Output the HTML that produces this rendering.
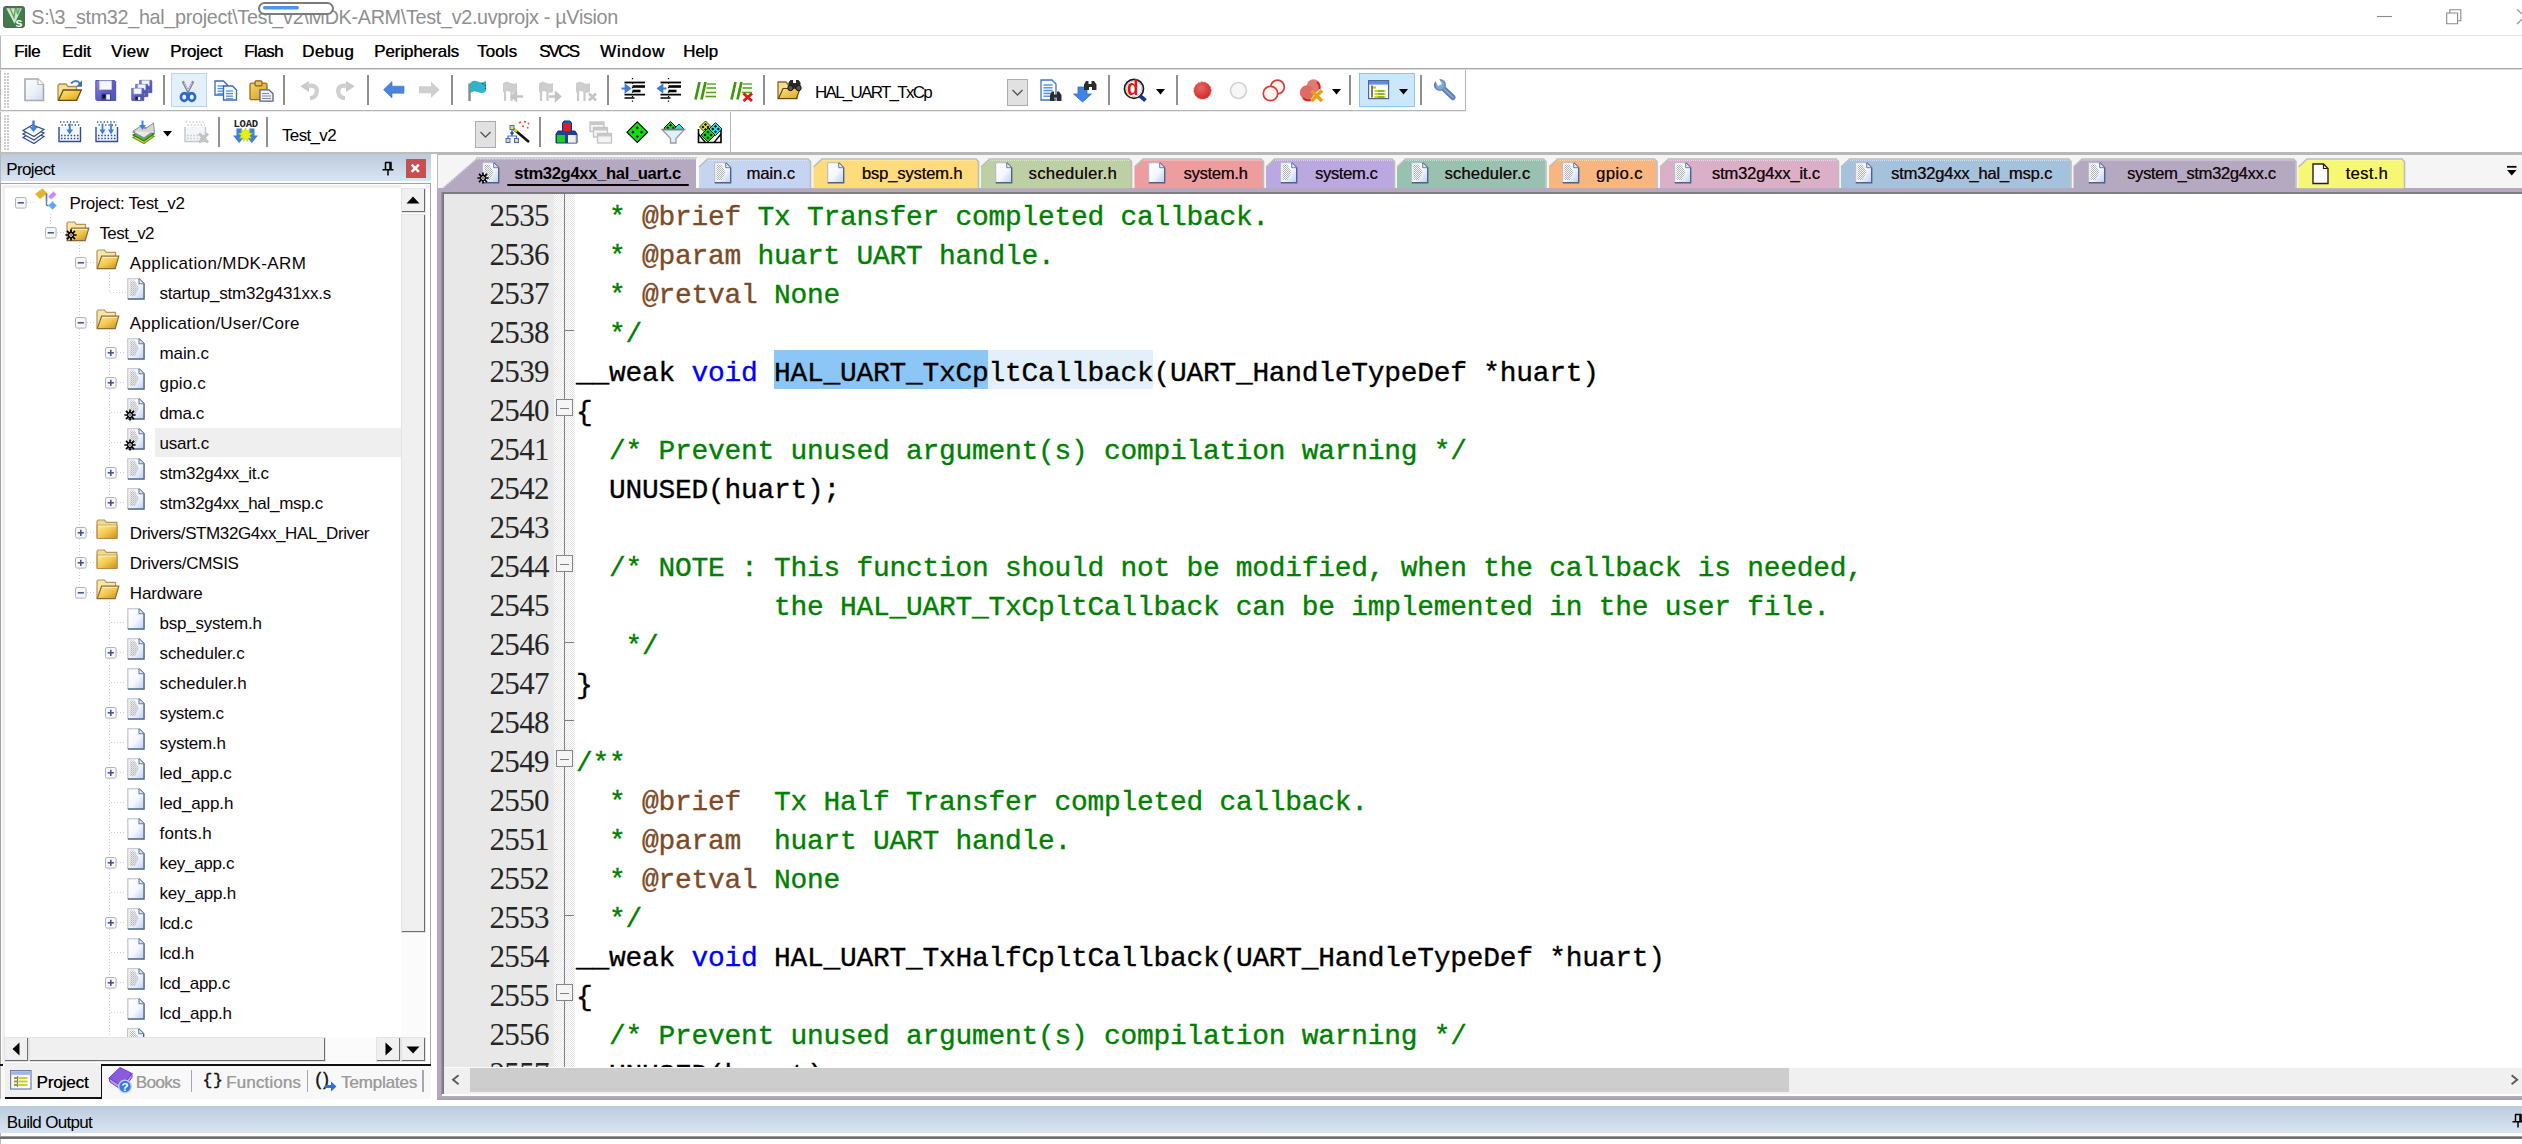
<!DOCTYPE html>
<html><head><meta charset="utf-8"><title>uVision</title>
<style>
html,body{margin:0;padding:0;}
body{width:2522px;height:1144px;overflow:hidden;background:#fff;position:relative;font-family:'Liberation Sans',sans-serif;}
div{box-sizing:border-box;}
svg{position:absolute;overflow:visible;}
</style></head><body>
<div style="position:absolute;left:0px;top:0px;width:2522px;height:35px;background:#fff"></div>
<svg style="left:3px;top:6px" width="22" height="22" viewBox="0 0 22 22">
<rect x="0.6" y="0.6" width="20.8" height="20.8" rx="2.6" fill="#3f7d49" stroke="#595f5a" stroke-width="1.1"/>
<path d="M3.200 2.200h15.600l-7.300 15.500z" fill="#dcefd9" opacity=".92"/>
<path d="M7 2.200l4 9 1.500-9M13.500 2.200l1 6 2-6" stroke="#4a9a55" stroke-width="1.300" fill="none" opacity=".9"/>
<text x="12.300" y="20.600" font-family="Liberation Sans, sans-serif" font-weight="bold" font-size="13" fill="#f5fbf4">s</text>
</svg>
<div style="position:absolute;left:31.3px;top:6.48px;white-space:pre;line-height:22.12px;font-family:'Liberation Sans',sans-serif;font-size:19.8px;font-weight:normal;color:#8f8f8f;letter-spacing:-0.316px;">S:\3_stm32_hal_project\Test_v2\MDK-ARM\Test_v2.uvprojx - µVision</div>
<svg style="left:257px;top:1px" width="78" height="16" viewBox="0 0 78 16">
<rect x="2" y="2" width="74" height="11" rx="5.5" fill="#fff" stroke="#7c7c7c" stroke-width="2"/>
<rect x="6" y="5" width="36" height="3.5" rx="1.7" fill="#4b97ea"/></svg>
<svg style="left:2370px;top:6px" width="152" height="24" viewBox="0 0 152 24">
<path d="M7 10.500h15" stroke="#8a8a8a" stroke-width="1.100" fill="none"/>
<path d="M76.700 7h10.900v10.700h-10.900z M79.800 7V3.800h11v10.900h-3.200" stroke="#8a8a8a" stroke-width="1.100" fill="none"/>
<path d="M147 3.300l8 7.500 M147 18l8-7.500" stroke="#8a8a8a" stroke-width="1.100" fill="none"/>
</svg>
<div style="position:absolute;left:0px;top:35px;width:2522px;height:1px;background:#e4e4e4"></div>
<div style="position:absolute;left:0px;top:36px;width:1px;height:1108px;background:#b9b9b9"></div>
<div style="position:absolute;left:14px;top:42.12px;white-space:pre;line-height:18.99px;font-family:'Liberation Sans',sans-serif;font-size:17px;font-weight:normal;color:#000;letter-spacing:-0.352px;text-shadow:0.5px 0 0 rgba(0,0,0,.75)">File</div>
<div style="position:absolute;left:62px;top:42.12px;white-space:pre;line-height:18.99px;font-family:'Liberation Sans',sans-serif;font-size:17px;font-weight:normal;color:#000;letter-spacing:-0.074px;text-shadow:0.5px 0 0 rgba(0,0,0,.75)">Edit</div>
<div style="position:absolute;left:111px;top:42.12px;white-space:pre;line-height:18.99px;font-family:'Liberation Sans',sans-serif;font-size:17px;font-weight:normal;color:#000;letter-spacing:0.363px;text-shadow:0.5px 0 0 rgba(0,0,0,.75)">View</div>
<div style="position:absolute;left:170px;top:42.12px;white-space:pre;line-height:18.99px;font-family:'Liberation Sans',sans-serif;font-size:17px;font-weight:normal;color:#000;letter-spacing:-0.132px;text-shadow:0.5px 0 0 rgba(0,0,0,.75)">Project</div>
<div style="position:absolute;left:244px;top:42.12px;white-space:pre;line-height:18.99px;font-family:'Liberation Sans',sans-serif;font-size:17px;font-weight:normal;color:#000;letter-spacing:-0.516px;text-shadow:0.5px 0 0 rgba(0,0,0,.75)">Flash</div>
<div style="position:absolute;left:302px;top:42.12px;white-space:pre;line-height:18.99px;font-family:'Liberation Sans',sans-serif;font-size:17px;font-weight:normal;color:#000;letter-spacing:0.378px;text-shadow:0.5px 0 0 rgba(0,0,0,.75)">Debug</div>
<div style="position:absolute;left:374px;top:42.12px;white-space:pre;line-height:18.99px;font-family:'Liberation Sans',sans-serif;font-size:17px;font-weight:normal;color:#000;letter-spacing:-0.091px;text-shadow:0.5px 0 0 rgba(0,0,0,.75)">Peripherals</div>
<div style="position:absolute;left:477px;top:42.12px;white-space:pre;line-height:18.99px;font-family:'Liberation Sans',sans-serif;font-size:17px;font-weight:normal;color:#000;letter-spacing:0.062px;text-shadow:0.5px 0 0 rgba(0,0,0,.75)">Tools</div>
<div style="position:absolute;left:539px;top:42.12px;white-space:pre;line-height:18.99px;font-family:'Liberation Sans',sans-serif;font-size:17px;font-weight:normal;color:#000;letter-spacing:-1.824px;text-shadow:0.5px 0 0 rgba(0,0,0,.75)">SVCS</div>
<div style="position:absolute;left:600px;top:42.12px;white-space:pre;line-height:18.99px;font-family:'Liberation Sans',sans-serif;font-size:17px;font-weight:normal;color:#000;letter-spacing:0.755px;text-shadow:0.5px 0 0 rgba(0,0,0,.75)">Window</div>
<div style="position:absolute;left:683px;top:42.12px;white-space:pre;line-height:18.99px;font-family:'Liberation Sans',sans-serif;font-size:17px;font-weight:normal;color:#000;letter-spacing:0.008px;text-shadow:0.5px 0 0 rgba(0,0,0,.75)">Help</div>
<div style="position:absolute;left:0px;top:68px;width:2522px;height:1px;background:#a9a9a9"></div>
<div style="position:absolute;left:0px;top:69px;width:2522px;height:1px;background:#dcdcdc"></div>
<div style="position:absolute;left:0px;top:110px;width:1466px;height:1px;background:#b4b4b4"></div>
<div style="position:absolute;left:1465px;top:70px;width:1px;height:41px;background:#b4b4b4"></div>
<div style="position:absolute;left:0px;top:111px;width:1466px;height:1px;background:#ececec"></div>
<div style="position:absolute;left:730px;top:112px;width:1px;height:42px;background:#b4b4b4"></div>
<div style="position:absolute;left:4px;top:73px;width:6px;height:35px;background-image:radial-gradient(circle at 1px 1px,#cdcdcd 0.75px,transparent 1.1px);background-size:3px 3px"></div>
<div style="position:absolute;left:4px;top:115px;width:6px;height:35px;background-image:radial-gradient(circle at 1px 1px,#cdcdcd 0.75px,transparent 1.1px);background-size:3px 3px"></div>
<div style="position:absolute;left:163px;top:75px;width:2px;height:30px;background:#8f8f8f;width:1.5px"></div>
<div style="position:absolute;left:283px;top:75px;width:2px;height:30px;background:#8f8f8f;width:1.5px"></div>
<div style="position:absolute;left:367px;top:75px;width:2px;height:30px;background:#8f8f8f;width:1.5px"></div>
<div style="position:absolute;left:451px;top:75px;width:2px;height:30px;background:#8f8f8f;width:1.5px"></div>
<div style="position:absolute;left:607px;top:75px;width:2px;height:30px;background:#8f8f8f;width:1.5px"></div>
<div style="position:absolute;left:763px;top:75px;width:2px;height:30px;background:#8f8f8f;width:1.5px"></div>
<div style="position:absolute;left:1108px;top:75px;width:2px;height:30px;background:#8f8f8f;width:1.5px"></div>
<div style="position:absolute;left:1176px;top:75px;width:2px;height:30px;background:#8f8f8f;width:1.5px"></div>
<div style="position:absolute;left:1349px;top:75px;width:2px;height:30px;background:#8f8f8f;width:1.5px"></div>
<div style="position:absolute;left:1420px;top:75px;width:2px;height:30px;background:#8f8f8f;width:1.5px"></div>
<div style="position:absolute;left:218px;top:117px;width:2px;height:30px;background:#8f8f8f;width:1.5px"></div>
<div style="position:absolute;left:266px;top:117px;width:2px;height:30px;background:#8f8f8f;width:1.5px"></div>
<div style="position:absolute;left:539px;top:117px;width:2px;height:30px;background:#8f8f8f;width:1.5px"></div>
<div style="position:absolute;left:171px;top:72.6px;width:36px;height:34.4px;background:#e3f0fa;border:1px solid #b4d7f3"></div>
<div style="position:absolute;left:1359px;top:73px;width:56px;height:34px;background:#cce6fb;border:1px solid #8cc4f2"></div>
<div style="position:absolute;left:815px;top:83.21px;white-space:pre;line-height:18.99px;font-family:'Liberation Sans',sans-serif;font-size:17px;font-weight:normal;color:#000;letter-spacing:-1.737px;">HAL_UART_TxCp</div>
<div style="position:absolute;left:1007px;top:79px;width:21px;height:27px;background:#e1e1e1;border:1px solid #adadad"></div>
<svg style="left:1007px;top:79px" width="21" height="27"><path d="M5.5 11l5 5 5-5" stroke="#555" stroke-width="1.3" fill="none"/></svg>
<div style="position:absolute;left:282px;top:125.61px;white-space:pre;line-height:18.99px;font-family:'Liberation Sans',sans-serif;font-size:17px;font-weight:normal;color:#000;letter-spacing:-0.656px;">Test_v2</div>
<div style="position:absolute;left:475px;top:121px;width:21px;height:27px;background:#e1e1e1;border:1px solid #adadad"></div>
<svg style="left:475px;top:121px" width="21" height="27"><path d="M5.5 11l5 5 5-5" stroke="#555" stroke-width="1.3" fill="none"/></svg>
<div style="position:absolute;left:0px;top:152px;width:437px;height:1.8px;background:#bdbdbd"></div>
<div style="position:absolute;left:436.7px;top:152.3px;width:2086px;height:2.5px;background:#b8b8b8"></div>
<div style="position:absolute;left:1px;top:154px;width:430px;height:26.5px;background:linear-gradient(#bccbdc,#d8e4f2)"></div>
<div style="position:absolute;left:6.2px;top:159.81px;white-space:pre;line-height:18.99px;font-family:'Liberation Sans',sans-serif;font-size:17px;font-weight:normal;color:#000;letter-spacing:-0.632px;">Project</div>
<svg style="left:381px;top:161px" width="14" height="15" viewBox="0 0 14 15"><path d="M4 1.5h6.5M4.5 1.5v7M9 1.5v7M10 1.5v7M1.5 8.8h11M7 9v5.5" stroke="#000" stroke-width="1.5" fill="none"/></svg>
<div style="position:absolute;left:406px;top:159px;width:19.5px;height:19px;background:#c84f4f"></div>
<svg style="left:406px;top:159px" width="20" height="19"><path d="M5.6 5.600l7.300 7.200 M12.900 5.600l-7.300 7.200" stroke="#fff" stroke-width="2.500" fill="none"/></svg>
<div style="position:absolute;left:0px;top:183.3px;width:430.5px;height:881px;border:1.5px solid #a2a2a2;border-right:1px solid #a8a8a8;border-bottom:none;background:#fff"></div>
<div style="position:absolute;left:1.5px;top:184.8px;width:428px;height:879px;border-top:3px solid #f0f0f0;border-left:3px solid #f0f0f0"></div>
<div style="position:absolute;left:437px;top:154.5px;width:2085px;height:34px;background:#f5f5f5"></div>
<div style="position:absolute;left:436.7px;top:154px;width:1px;height:34px;background:#b9b9b9"></div>
<div style="position:absolute;left:431px;top:154px;width:5.7px;height:945px;background:#fff"></div>
<div style="position:absolute;left:437px;top:188px;width:2085px;height:4px;background:#b5a8c1"></div>
<div style="position:absolute;left:437px;top:188px;width:4.6px;height:911px;background:#b5a8c1"></div>
<div style="position:absolute;left:442px;top:191.5px;width:2080px;height:2.2px;background:#7d7d7d"></div>
<div style="position:absolute;left:441.4px;top:191.5px;width:2.7px;height:902.2px;background:linear-gradient(90deg,#9a9a9a,#6e6e6e)"></div>
<svg style="left:0;top:0" width="2522" height="200"><path d="M442 188.5L476.5 158.6H696V188.5z" fill="#b5a8c1"/><path d="M443 188L476.5 159H696.5" fill="none" stroke="#d9d4de" stroke-width="1.5" stroke-dasharray="1.5 1.5"/><path d="M697.5 159.5V188" stroke="#fbfbfb" stroke-width="2.5"/><path d="M476 157.6H697" stroke="#c9c9c9" stroke-width="1"/></svg>
<svg style="left:481.5px;top:162px" width="17.5" height="21.5" viewBox="0 0 17.5 21.5"><linearGradient id="f64" x1="0" y1="0" x2="1" y2="1"><stop offset="0" stop-color="#fff"/><stop offset=".55" stop-color="#f4f7fd"/><stop offset="1" stop-color="#b9cdf0"/></linearGradient><path d="M.7 .7h11l5 5v15H.7z" fill="url(#f64)"/><path d="M.7 20.7V.7h11" fill="none" stroke="#b4bccb" stroke-width="1.1"/><path d="M11.7 .7l5 5v15H.7" fill="none" stroke="#4f6389" stroke-width="1.4"/><path d="M11.7 .9v4.8h4.8" fill="#dfe8f8" stroke="#6a7da3" stroke-width="1"/><pattern id="p64" width="2" height="2" patternUnits="userSpaceOnUse"><rect width="1" height="1" fill="#9a9a9a"/><rect x="1" y="1" width="1" height="1" fill="#9a9a9a"/></pattern><path d="M2.5 2.5h5l4 7.5-4 8h-5z" fill="url(#p64)" opacity=".75"/></svg>
<svg style="left:475.5px;top:171px" width="14" height="14" viewBox="-7 -7 14 14"><g stroke="#000" stroke-width="1.7" fill="none"><path d="M-5.6 0h11.2M0-5.6v11.2M-4.032-4.032l8.064 8.064M4.032-4.032l-8.064 8.064"/></g><circle r="2.3" fill="#fff" stroke="#000" stroke-width="1.2"/><circle r=".8" fill="#000"/></svg>
<div style="position:absolute;left:514.3px;top:164.98px;white-space:pre;line-height:18.54px;font-family:'Liberation Sans',sans-serif;font-size:16.6px;font-weight:bold;color:#000;letter-spacing:-0.336px;">stm32g4xx_hal_uart.c</div>
<div style="position:absolute;left:507px;top:183.6px;width:182px;height:2.6px;background:#0a0406;border-radius:1.3px"></div>
<svg style="left:0;top:0" width="2522" height="200"><path d="M699 188.3V167l8.5-7.6H808l2 2V188.3z" fill="#c5d5f1"/><path d="M699 167l8.5-8H808l2.5 2.5V188" fill="none" stroke="#bdbdbd" stroke-width="1.6"/><path d="M708 160.4H808" fill="none" stroke="#fff" stroke-opacity=".55" stroke-width="1" stroke-dasharray="1 1"/><path d="M813.5 188.3V167l8.5-7.6H976l2 2V188.3z" fill="#fedc7b"/><path d="M813.5 167l8.5-8H976l2.5 2.5V188" fill="none" stroke="#bdbdbd" stroke-width="1.6"/><path d="M822.5 160.4H976" fill="none" stroke="#fff" stroke-opacity=".55" stroke-width="1" stroke-dasharray="1 1"/><path d="M981 188.3V167l8.5-7.6H1129l2 2V188.3z" fill="#bdd0a3"/><path d="M981 167l8.5-8H1129l2.5 2.5V188" fill="none" stroke="#bdbdbd" stroke-width="1.6"/><path d="M990 160.4H1129" fill="none" stroke="#fff" stroke-opacity=".55" stroke-width="1" stroke-dasharray="1 1"/><path d="M1134.5 188.3V167l8.5-7.6H1261l2 2V188.3z" fill="#ee9d9e"/><path d="M1134.5 167l8.5-8H1261l2.5 2.5V188" fill="none" stroke="#bdbdbd" stroke-width="1.6"/><path d="M1143.5 160.4H1261" fill="none" stroke="#fff" stroke-opacity=".55" stroke-width="1" stroke-dasharray="1 1"/><path d="M1266 188.3V167l8.5-7.6H1392l2 2V188.3z" fill="#bba8e0"/><path d="M1266 167l8.5-8H1392l2.5 2.5V188" fill="none" stroke="#bdbdbd" stroke-width="1.6"/><path d="M1275 160.4H1392" fill="none" stroke="#fff" stroke-opacity=".55" stroke-width="1" stroke-dasharray="1 1"/><path d="M1397 188.3V167l8.5-7.6H1543.5l2 2V188.3z" fill="#98c1b0"/><path d="M1397 167l8.5-8H1543.5l2.5 2.5V188" fill="none" stroke="#bdbdbd" stroke-width="1.6"/><path d="M1406 160.4H1543.5" fill="none" stroke="#fff" stroke-opacity=".55" stroke-width="1" stroke-dasharray="1 1"/><path d="M1549 188.3V167l8.5-7.6H1654.5l2 2V188.3z" fill="#f7b57f"/><path d="M1549 167l8.5-8H1654.5l2.5 2.5V188" fill="none" stroke="#bdbdbd" stroke-width="1.6"/><path d="M1558 160.4H1654.5" fill="none" stroke="#fff" stroke-opacity=".55" stroke-width="1" stroke-dasharray="1 1"/><path d="M1660 188.3V167l8.5-7.6H1836l2 2V188.3z" fill="#dbafc8"/><path d="M1660 167l8.5-8H1836l2.5 2.5V188" fill="none" stroke="#bdbdbd" stroke-width="1.6"/><path d="M1669 160.4H1836" fill="none" stroke="#fff" stroke-opacity=".55" stroke-width="1" stroke-dasharray="1 1"/><path d="M1841 188.3V167l8.5-7.6H2068.5l2 2V188.3z" fill="#a5c2dd"/><path d="M1841 167l8.5-8H2068.5l2.5 2.5V188" fill="none" stroke="#bdbdbd" stroke-width="1.6"/><path d="M1850 160.4H2068.5" fill="none" stroke="#fff" stroke-opacity=".55" stroke-width="1" stroke-dasharray="1 1"/><path d="M2073.5 188.3V167l8.5-7.6H2293.5l2 2V188.3z" fill="#b5a8c1"/><path d="M2073.5 167l8.5-8H2293.5l2.5 2.5V188" fill="none" stroke="#bdbdbd" stroke-width="1.6"/><path d="M2082.5 160.4H2293.5" fill="none" stroke="#fff" stroke-opacity=".55" stroke-width="1" stroke-dasharray="1 1"/><path d="M2298.5 188.3V167l8.5-7.6H2402l2 2V188.3z" fill="#f6f874"/><path d="M2298.5 167l8.5-8H2402l2.5 2.5V188" fill="none" stroke="#bdbdbd" stroke-width="1.6"/><path d="M2307.5 160.4H2402" fill="none" stroke="#fff" stroke-opacity=".55" stroke-width="1" stroke-dasharray="1 1"/></svg>
<svg style="left:713.5px;top:161.8px" width="17.5" height="21.5" viewBox="0 0 17.5 21.5"><linearGradient id="f69" x1="0" y1="0" x2="1" y2="1"><stop offset="0" stop-color="#fff"/><stop offset=".55" stop-color="#f4f7fd"/><stop offset="1" stop-color="#b9cdf0"/></linearGradient><path d="M.7 .7h11l5 5v15H.7z" fill="url(#f69)"/><path d="M.7 20.7V.7h11" fill="none" stroke="#b4bccb" stroke-width="1.1"/><path d="M11.7 .7l5 5v15H.7" fill="none" stroke="#4f6389" stroke-width="1.4"/><path d="M11.7 .9v4.8h4.8" fill="#dfe8f8" stroke="#6a7da3" stroke-width="1"/><pattern id="p69" width="2" height="2" patternUnits="userSpaceOnUse"><rect width="1" height="1" fill="#9a9a9a"/><rect x="1" y="1" width="1" height="1" fill="#9a9a9a"/></pattern><path d="M2.5 2.5h5l4 7.5-4 8h-5z" fill="url(#p69)" opacity=".75"/></svg>
<div style="position:absolute;left:746.4px;top:164.98px;white-space:pre;line-height:18.54px;font-family:'Liberation Sans',sans-serif;font-size:16.6px;font-weight:normal;color:#15090c;letter-spacing:-0.046px;text-shadow:0.35px 0 0 rgba(20,8,12,.7)">main.c</div>
<svg style="left:827px;top:161.8px" width="17.5" height="21.5" viewBox="0 0 17.5 21.5"><linearGradient id="f71" x1="0" y1="0" x2="1" y2="1"><stop offset="0" stop-color="#fff"/><stop offset=".55" stop-color="#f4f7fd"/><stop offset="1" stop-color="#b9cdf0"/></linearGradient><path d="M.7 .7h11l5 5v15H.7z" fill="url(#f71)"/><path d="M.7 20.7V.7h11" fill="none" stroke="#b4bccb" stroke-width="1.1"/><path d="M11.7 .7l5 5v15H.7" fill="none" stroke="#4f6389" stroke-width="1.4"/><path d="M11.7 .9v4.8h4.8" fill="#dfe8f8" stroke="#6a7da3" stroke-width="1"/></svg>
<div style="position:absolute;left:861.8px;top:164.98px;white-space:pre;line-height:18.54px;font-family:'Liberation Sans',sans-serif;font-size:16.6px;font-weight:normal;color:#15090c;letter-spacing:-0.156px;text-shadow:0.35px 0 0 rgba(20,8,12,.7)">bsp_system.h</div>
<svg style="left:995px;top:161.8px" width="17.5" height="21.5" viewBox="0 0 17.5 21.5"><linearGradient id="f73" x1="0" y1="0" x2="1" y2="1"><stop offset="0" stop-color="#fff"/><stop offset=".55" stop-color="#f4f7fd"/><stop offset="1" stop-color="#b9cdf0"/></linearGradient><path d="M.7 .7h11l5 5v15H.7z" fill="url(#f73)"/><path d="M.7 20.7V.7h11" fill="none" stroke="#b4bccb" stroke-width="1.1"/><path d="M11.7 .7l5 5v15H.7" fill="none" stroke="#4f6389" stroke-width="1.4"/><path d="M11.7 .9v4.8h4.8" fill="#dfe8f8" stroke="#6a7da3" stroke-width="1"/></svg>
<div style="position:absolute;left:1028.5px;top:164.98px;white-space:pre;line-height:18.54px;font-family:'Liberation Sans',sans-serif;font-size:16.6px;font-weight:normal;color:#15090c;letter-spacing:0.330px;text-shadow:0.35px 0 0 rgba(20,8,12,.7)">scheduler.h</div>
<svg style="left:1148.4px;top:161.8px" width="17.5" height="21.5" viewBox="0 0 17.5 21.5"><linearGradient id="f75" x1="0" y1="0" x2="1" y2="1"><stop offset="0" stop-color="#fff"/><stop offset=".55" stop-color="#f4f7fd"/><stop offset="1" stop-color="#b9cdf0"/></linearGradient><path d="M.7 .7h11l5 5v15H.7z" fill="url(#f75)"/><path d="M.7 20.7V.7h11" fill="none" stroke="#b4bccb" stroke-width="1.1"/><path d="M11.7 .7l5 5v15H.7" fill="none" stroke="#4f6389" stroke-width="1.4"/><path d="M11.7 .9v4.8h4.8" fill="#dfe8f8" stroke="#6a7da3" stroke-width="1"/></svg>
<div style="position:absolute;left:1183.4px;top:164.98px;white-space:pre;line-height:18.54px;font-family:'Liberation Sans',sans-serif;font-size:16.6px;font-weight:normal;color:#15090c;letter-spacing:-0.288px;text-shadow:0.35px 0 0 rgba(20,8,12,.7)">system.h</div>
<svg style="left:1280.4px;top:161.8px" width="17.5" height="21.5" viewBox="0 0 17.5 21.5"><linearGradient id="f77" x1="0" y1="0" x2="1" y2="1"><stop offset="0" stop-color="#fff"/><stop offset=".55" stop-color="#f4f7fd"/><stop offset="1" stop-color="#b9cdf0"/></linearGradient><path d="M.7 .7h11l5 5v15H.7z" fill="url(#f77)"/><path d="M.7 20.7V.7h11" fill="none" stroke="#b4bccb" stroke-width="1.1"/><path d="M11.7 .7l5 5v15H.7" fill="none" stroke="#4f6389" stroke-width="1.4"/><path d="M11.7 .9v4.8h4.8" fill="#dfe8f8" stroke="#6a7da3" stroke-width="1"/><pattern id="p77" width="2" height="2" patternUnits="userSpaceOnUse"><rect width="1" height="1" fill="#9a9a9a"/><rect x="1" y="1" width="1" height="1" fill="#9a9a9a"/></pattern><path d="M2.5 2.5h5l4 7.5-4 8h-5z" fill="url(#p77)" opacity=".75"/></svg>
<div style="position:absolute;left:1315px;top:164.98px;white-space:pre;line-height:18.54px;font-family:'Liberation Sans',sans-serif;font-size:16.6px;font-weight:normal;color:#15090c;letter-spacing:-0.384px;text-shadow:0.35px 0 0 rgba(20,8,12,.7)">system.c</div>
<svg style="left:1410.6px;top:161.8px" width="17.5" height="21.5" viewBox="0 0 17.5 21.5"><linearGradient id="f79" x1="0" y1="0" x2="1" y2="1"><stop offset="0" stop-color="#fff"/><stop offset=".55" stop-color="#f4f7fd"/><stop offset="1" stop-color="#b9cdf0"/></linearGradient><path d="M.7 .7h11l5 5v15H.7z" fill="url(#f79)"/><path d="M.7 20.7V.7h11" fill="none" stroke="#b4bccb" stroke-width="1.1"/><path d="M11.7 .7l5 5v15H.7" fill="none" stroke="#4f6389" stroke-width="1.4"/><path d="M11.7 .9v4.8h4.8" fill="#dfe8f8" stroke="#6a7da3" stroke-width="1"/><pattern id="p79" width="2" height="2" patternUnits="userSpaceOnUse"><rect width="1" height="1" fill="#9a9a9a"/><rect x="1" y="1" width="1" height="1" fill="#9a9a9a"/></pattern><path d="M2.5 2.5h5l4 7.5-4 8h-5z" fill="url(#p79)" opacity=".75"/></svg>
<div style="position:absolute;left:1444.4px;top:164.98px;white-space:pre;line-height:18.54px;font-family:'Liberation Sans',sans-serif;font-size:16.6px;font-weight:normal;color:#15090c;letter-spacing:0.177px;text-shadow:0.35px 0 0 rgba(20,8,12,.7)">scheduler.c</div>
<svg style="left:1562.4px;top:161.8px" width="17.5" height="21.5" viewBox="0 0 17.5 21.5"><linearGradient id="f81" x1="0" y1="0" x2="1" y2="1"><stop offset="0" stop-color="#fff"/><stop offset=".55" stop-color="#f4f7fd"/><stop offset="1" stop-color="#b9cdf0"/></linearGradient><path d="M.7 .7h11l5 5v15H.7z" fill="url(#f81)"/><path d="M.7 20.7V.7h11" fill="none" stroke="#b4bccb" stroke-width="1.1"/><path d="M11.7 .7l5 5v15H.7" fill="none" stroke="#4f6389" stroke-width="1.4"/><path d="M11.7 .9v4.8h4.8" fill="#dfe8f8" stroke="#6a7da3" stroke-width="1"/><pattern id="p81" width="2" height="2" patternUnits="userSpaceOnUse"><rect width="1" height="1" fill="#9a9a9a"/><rect x="1" y="1" width="1" height="1" fill="#9a9a9a"/></pattern><path d="M2.5 2.5h5l4 7.5-4 8h-5z" fill="url(#p81)" opacity=".75"/></svg>
<div style="position:absolute;left:1596px;top:164.98px;white-space:pre;line-height:18.54px;font-family:'Liberation Sans',sans-serif;font-size:16.6px;font-weight:normal;color:#15090c;letter-spacing:0.420px;text-shadow:0.35px 0 0 rgba(20,8,12,.7)">gpio.c</div>
<svg style="left:1673.6px;top:161.8px" width="17.5" height="21.5" viewBox="0 0 17.5 21.5"><linearGradient id="f83" x1="0" y1="0" x2="1" y2="1"><stop offset="0" stop-color="#fff"/><stop offset=".55" stop-color="#f4f7fd"/><stop offset="1" stop-color="#b9cdf0"/></linearGradient><path d="M.7 .7h11l5 5v15H.7z" fill="url(#f83)"/><path d="M.7 20.7V.7h11" fill="none" stroke="#b4bccb" stroke-width="1.1"/><path d="M11.7 .7l5 5v15H.7" fill="none" stroke="#4f6389" stroke-width="1.4"/><path d="M11.7 .9v4.8h4.8" fill="#dfe8f8" stroke="#6a7da3" stroke-width="1"/><pattern id="p83" width="2" height="2" patternUnits="userSpaceOnUse"><rect width="1" height="1" fill="#9a9a9a"/><rect x="1" y="1" width="1" height="1" fill="#9a9a9a"/></pattern><path d="M2.5 2.5h5l4 7.5-4 8h-5z" fill="url(#p83)" opacity=".75"/></svg>
<div style="position:absolute;left:1711.8px;top:164.98px;white-space:pre;line-height:18.54px;font-family:'Liberation Sans',sans-serif;font-size:16.6px;font-weight:normal;color:#15090c;letter-spacing:-0.191px;text-shadow:0.35px 0 0 rgba(20,8,12,.7)">stm32g4xx_it.c</div>
<svg style="left:1855.4px;top:161.8px" width="17.5" height="21.5" viewBox="0 0 17.5 21.5"><linearGradient id="f85" x1="0" y1="0" x2="1" y2="1"><stop offset="0" stop-color="#fff"/><stop offset=".55" stop-color="#f4f7fd"/><stop offset="1" stop-color="#b9cdf0"/></linearGradient><path d="M.7 .7h11l5 5v15H.7z" fill="url(#f85)"/><path d="M.7 20.7V.7h11" fill="none" stroke="#b4bccb" stroke-width="1.1"/><path d="M11.7 .7l5 5v15H.7" fill="none" stroke="#4f6389" stroke-width="1.4"/><path d="M11.7 .9v4.8h4.8" fill="#dfe8f8" stroke="#6a7da3" stroke-width="1"/><pattern id="p85" width="2" height="2" patternUnits="userSpaceOnUse"><rect width="1" height="1" fill="#9a9a9a"/><rect x="1" y="1" width="1" height="1" fill="#9a9a9a"/></pattern><path d="M2.5 2.5h5l4 7.5-4 8h-5z" fill="url(#p85)" opacity=".75"/></svg>
<div style="position:absolute;left:1891px;top:164.98px;white-space:pre;line-height:18.54px;font-family:'Liberation Sans',sans-serif;font-size:16.6px;font-weight:normal;color:#15090c;letter-spacing:-0.216px;text-shadow:0.35px 0 0 rgba(20,8,12,.7)">stm32g4xx_hal_msp.c</div>
<svg style="left:2088px;top:161.8px" width="17.5" height="21.5" viewBox="0 0 17.5 21.5"><linearGradient id="f87" x1="0" y1="0" x2="1" y2="1"><stop offset="0" stop-color="#fff"/><stop offset=".55" stop-color="#f4f7fd"/><stop offset="1" stop-color="#b9cdf0"/></linearGradient><path d="M.7 .7h11l5 5v15H.7z" fill="url(#f87)"/><path d="M.7 20.7V.7h11" fill="none" stroke="#b4bccb" stroke-width="1.1"/><path d="M11.7 .7l5 5v15H.7" fill="none" stroke="#4f6389" stroke-width="1.4"/><path d="M11.7 .9v4.8h4.8" fill="#dfe8f8" stroke="#6a7da3" stroke-width="1"/><pattern id="p87" width="2" height="2" patternUnits="userSpaceOnUse"><rect width="1" height="1" fill="#9a9a9a"/><rect x="1" y="1" width="1" height="1" fill="#9a9a9a"/></pattern><path d="M2.5 2.5h5l4 7.5-4 8h-5z" fill="url(#p87)" opacity=".75"/></svg>
<div style="position:absolute;left:2127px;top:164.98px;white-space:pre;line-height:18.54px;font-family:'Liberation Sans',sans-serif;font-size:16.6px;font-weight:normal;color:#15090c;letter-spacing:-0.352px;text-shadow:0.35px 0 0 rgba(20,8,12,.7)">system_stm32g4xx.c</div>
<svg style="left:2311px;top:162.5px" width="19.5" height="21.5" viewBox="0 0 17.5 21.5"><path d="M1 1h10.5l4.5 4.5v15h-15z" fill="#fff" stroke="#222" stroke-width="1.4"/><path d="M11.5 1v4.5h4.5" fill="none" stroke="#222" stroke-width="1.2"/></svg>
<div style="position:absolute;left:2345.6px;top:164.98px;white-space:pre;line-height:18.54px;font-family:'Liberation Sans',sans-serif;font-size:16.6px;font-weight:normal;color:#15090c;letter-spacing:0.301px;text-shadow:0.35px 0 0 rgba(20,8,12,.7)">test.h</div>
<svg style="left:2506px;top:165px" width="12" height="12"><path d="M1 1.8h9.5" stroke="#000" stroke-width="1.8"/><path d="M1 5h9.5l-4.75 5.5z" fill="#000"/></svg>
<div style="position:absolute;left:444px;top:194px;width:2078px;height:873.5px;background:#fff;overflow:hidden"></div>
<div style="position:absolute;left:444px;top:194px;width:109.5px;height:873.5px;background:#e8e8e8"></div>
<div style="position:absolute;left:553.5px;top:194px;width:21.5px;height:873.5px;background-color:#f3f3f3;background-image:conic-gradient(#fff 25%,#e6e6e6 0 50%,#fff 0 75%,#e6e6e6 0);background-size:2px 2px"></div>
<div style="position:absolute;left:563.6px;top:194px;width:1.3px;height:873.5px;background:#808080"></div>
<div style="position:absolute;left:773.5px;top:350px;width:214.5px;height:39px;background:#8cc6f6"></div>
<div style="position:absolute;left:988px;top:350px;width:165px;height:39px;background:#e3f0fc"></div>
<div style="position:absolute;left:0;top:0;width:2522px;height:1067.5px;overflow:hidden"><div style="position:absolute;left:444px;top:195.5px;width:105px;height:39px;line-height:39px;text-align:right;font-family:'Liberation Serif',serif;font-size:31px;letter-spacing:-0.6px;color:#262626;transform-origin:100% 50%">2535</div><div style="position:absolute;left:576.1px;top:197.6px;height:39px;line-height:39px;white-space:pre;font-family:'Liberation Mono',monospace;font-size:27.9px;letter-spacing:-0.2427px;-webkit-text-stroke:0.35px"><span style="color:#008000">  * </span><span style="color:#7d4a26">@brief</span><span style="color:#008000"> Tx Transfer completed callback.</span></div><div style="position:absolute;left:444px;top:234.5px;width:105px;height:39px;line-height:39px;text-align:right;font-family:'Liberation Serif',serif;font-size:31px;letter-spacing:-0.6px;color:#262626;transform-origin:100% 50%">2536</div><div style="position:absolute;left:576.1px;top:236.6px;height:39px;line-height:39px;white-space:pre;font-family:'Liberation Mono',monospace;font-size:27.9px;letter-spacing:-0.2427px;-webkit-text-stroke:0.35px"><span style="color:#008000">  * </span><span style="color:#7d4a26">@param</span><span style="color:#008000"> huart UART handle.</span></div><div style="position:absolute;left:444px;top:273.5px;width:105px;height:39px;line-height:39px;text-align:right;font-family:'Liberation Serif',serif;font-size:31px;letter-spacing:-0.6px;color:#262626;transform-origin:100% 50%">2537</div><div style="position:absolute;left:576.1px;top:275.6px;height:39px;line-height:39px;white-space:pre;font-family:'Liberation Mono',monospace;font-size:27.9px;letter-spacing:-0.2427px;-webkit-text-stroke:0.35px"><span style="color:#008000">  * </span><span style="color:#7d4a26">@retval</span><span style="color:#008000"> None</span></div><div style="position:absolute;left:444px;top:312.5px;width:105px;height:39px;line-height:39px;text-align:right;font-family:'Liberation Serif',serif;font-size:31px;letter-spacing:-0.6px;color:#262626;transform-origin:100% 50%">2538</div><div style="position:absolute;left:576.1px;top:314.6px;height:39px;line-height:39px;white-space:pre;font-family:'Liberation Mono',monospace;font-size:27.9px;letter-spacing:-0.2427px;-webkit-text-stroke:0.35px"><span style="color:#008000">  */</span></div><div style="position:absolute;left:564px;top:330.2px;width:9.5px;height:1.3px;background:#808080"></div><div style="position:absolute;left:444px;top:351.5px;width:105px;height:39px;line-height:39px;text-align:right;font-family:'Liberation Serif',serif;font-size:31px;letter-spacing:-0.6px;color:#262626;transform-origin:100% 50%">2539</div><div style="position:absolute;left:576.1px;top:353.6px;height:39px;line-height:39px;white-space:pre;font-family:'Liberation Mono',monospace;font-size:27.9px;letter-spacing:-0.2427px;-webkit-text-stroke:0.35px"><span style="color:#000">__weak </span><span style="color:#0000ff">void</span><span style="color:#000"> HAL_UART_TxCpltCallback(UART_HandleTypeDef *huart)</span></div><div style="position:absolute;left:444px;top:390.5px;width:105px;height:39px;line-height:39px;text-align:right;font-family:'Liberation Serif',serif;font-size:31px;letter-spacing:-0.6px;color:#262626;transform-origin:100% 50%">2540</div><div style="position:absolute;left:576.1px;top:392.6px;height:39px;line-height:39px;white-space:pre;font-family:'Liberation Mono',monospace;font-size:27.9px;letter-spacing:-0.2427px;-webkit-text-stroke:0.35px"><span style="color:#000">{</span></div><div style="position:absolute;left:555.6px;top:399.4px;width:17.4px;height:16.8px;background:#f5f5f5;border:1.5px solid #858585"></div><div style="position:absolute;left:559.5px;top:407.5px;width:9.6px;height:1.5px;background:#808080"></div><div style="position:absolute;left:444px;top:429.5px;width:105px;height:39px;line-height:39px;text-align:right;font-family:'Liberation Serif',serif;font-size:31px;letter-spacing:-0.6px;color:#262626;transform-origin:100% 50%">2541</div><div style="position:absolute;left:576.1px;top:431.6px;height:39px;line-height:39px;white-space:pre;font-family:'Liberation Mono',monospace;font-size:27.9px;letter-spacing:-0.2427px;-webkit-text-stroke:0.35px"><span style="color:#008000">  /* Prevent unused argument(s) compilation warning */</span></div><div style="position:absolute;left:444px;top:468.5px;width:105px;height:39px;line-height:39px;text-align:right;font-family:'Liberation Serif',serif;font-size:31px;letter-spacing:-0.6px;color:#262626;transform-origin:100% 50%">2542</div><div style="position:absolute;left:576.1px;top:470.6px;height:39px;line-height:39px;white-space:pre;font-family:'Liberation Mono',monospace;font-size:27.9px;letter-spacing:-0.2427px;-webkit-text-stroke:0.35px"><span style="color:#000">  UNUSED(huart);</span></div><div style="position:absolute;left:444px;top:507.5px;width:105px;height:39px;line-height:39px;text-align:right;font-family:'Liberation Serif',serif;font-size:31px;letter-spacing:-0.6px;color:#262626;transform-origin:100% 50%">2543</div><div style="position:absolute;left:444px;top:546.5px;width:105px;height:39px;line-height:39px;text-align:right;font-family:'Liberation Serif',serif;font-size:31px;letter-spacing:-0.6px;color:#262626;transform-origin:100% 50%">2544</div><div style="position:absolute;left:576.1px;top:548.6px;height:39px;line-height:39px;white-space:pre;font-family:'Liberation Mono',monospace;font-size:27.9px;letter-spacing:-0.2427px;-webkit-text-stroke:0.35px"><span style="color:#008000">  /* NOTE : This function should not be modified, when the callback is needed,</span></div><div style="position:absolute;left:555.6px;top:555.4px;width:17.4px;height:16.8px;background:#f5f5f5;border:1.5px solid #858585"></div><div style="position:absolute;left:559.5px;top:563.5px;width:9.6px;height:1.5px;background:#808080"></div><div style="position:absolute;left:444px;top:585.5px;width:105px;height:39px;line-height:39px;text-align:right;font-family:'Liberation Serif',serif;font-size:31px;letter-spacing:-0.6px;color:#262626;transform-origin:100% 50%">2545</div><div style="position:absolute;left:576.1px;top:587.6px;height:39px;line-height:39px;white-space:pre;font-family:'Liberation Mono',monospace;font-size:27.9px;letter-spacing:-0.2427px;-webkit-text-stroke:0.35px"><span style="color:#008000">            the HAL_UART_TxCpltCallback can be implemented in the user file.</span></div><div style="position:absolute;left:444px;top:624.5px;width:105px;height:39px;line-height:39px;text-align:right;font-family:'Liberation Serif',serif;font-size:31px;letter-spacing:-0.6px;color:#262626;transform-origin:100% 50%">2546</div><div style="position:absolute;left:576.1px;top:626.6px;height:39px;line-height:39px;white-space:pre;font-family:'Liberation Mono',monospace;font-size:27.9px;letter-spacing:-0.2427px;-webkit-text-stroke:0.35px"><span style="color:#008000">   */</span></div><div style="position:absolute;left:564px;top:642.2px;width:9.5px;height:1.3px;background:#808080"></div><div style="position:absolute;left:444px;top:663.5px;width:105px;height:39px;line-height:39px;text-align:right;font-family:'Liberation Serif',serif;font-size:31px;letter-spacing:-0.6px;color:#262626;transform-origin:100% 50%">2547</div><div style="position:absolute;left:576.1px;top:665.6px;height:39px;line-height:39px;white-space:pre;font-family:'Liberation Mono',monospace;font-size:27.9px;letter-spacing:-0.2427px;-webkit-text-stroke:0.35px"><span style="color:#000">}</span></div><div style="position:absolute;left:444px;top:702.5px;width:105px;height:39px;line-height:39px;text-align:right;font-family:'Liberation Serif',serif;font-size:31px;letter-spacing:-0.6px;color:#262626;transform-origin:100% 50%">2548</div><div style="position:absolute;left:564px;top:720.2px;width:9.5px;height:1.3px;background:#808080"></div><div style="position:absolute;left:444px;top:741.5px;width:105px;height:39px;line-height:39px;text-align:right;font-family:'Liberation Serif',serif;font-size:31px;letter-spacing:-0.6px;color:#262626;transform-origin:100% 50%">2549</div><div style="position:absolute;left:576.1px;top:743.6px;height:39px;line-height:39px;white-space:pre;font-family:'Liberation Mono',monospace;font-size:27.9px;letter-spacing:-0.2427px;-webkit-text-stroke:0.35px"><span style="color:#008000">/**</span></div><div style="position:absolute;left:555.6px;top:750.4px;width:17.4px;height:16.8px;background:#f5f5f5;border:1.5px solid #858585"></div><div style="position:absolute;left:559.5px;top:758.5px;width:9.6px;height:1.5px;background:#808080"></div><div style="position:absolute;left:444px;top:780.5px;width:105px;height:39px;line-height:39px;text-align:right;font-family:'Liberation Serif',serif;font-size:31px;letter-spacing:-0.6px;color:#262626;transform-origin:100% 50%">2550</div><div style="position:absolute;left:576.1px;top:782.6px;height:39px;line-height:39px;white-space:pre;font-family:'Liberation Mono',monospace;font-size:27.9px;letter-spacing:-0.2427px;-webkit-text-stroke:0.35px"><span style="color:#008000">  * </span><span style="color:#7d4a26">@brief</span><span style="color:#008000">  Tx Half Transfer completed callback.</span></div><div style="position:absolute;left:444px;top:819.5px;width:105px;height:39px;line-height:39px;text-align:right;font-family:'Liberation Serif',serif;font-size:31px;letter-spacing:-0.6px;color:#262626;transform-origin:100% 50%">2551</div><div style="position:absolute;left:576.1px;top:821.6px;height:39px;line-height:39px;white-space:pre;font-family:'Liberation Mono',monospace;font-size:27.9px;letter-spacing:-0.2427px;-webkit-text-stroke:0.35px"><span style="color:#008000">  * </span><span style="color:#7d4a26">@param</span><span style="color:#008000">  huart UART handle.</span></div><div style="position:absolute;left:444px;top:858.5px;width:105px;height:39px;line-height:39px;text-align:right;font-family:'Liberation Serif',serif;font-size:31px;letter-spacing:-0.6px;color:#262626;transform-origin:100% 50%">2552</div><div style="position:absolute;left:576.1px;top:860.6px;height:39px;line-height:39px;white-space:pre;font-family:'Liberation Mono',monospace;font-size:27.9px;letter-spacing:-0.2427px;-webkit-text-stroke:0.35px"><span style="color:#008000">  * </span><span style="color:#7d4a26">@retval</span><span style="color:#008000"> None</span></div><div style="position:absolute;left:444px;top:897.5px;width:105px;height:39px;line-height:39px;text-align:right;font-family:'Liberation Serif',serif;font-size:31px;letter-spacing:-0.6px;color:#262626;transform-origin:100% 50%">2553</div><div style="position:absolute;left:576.1px;top:899.6px;height:39px;line-height:39px;white-space:pre;font-family:'Liberation Mono',monospace;font-size:27.9px;letter-spacing:-0.2427px;-webkit-text-stroke:0.35px"><span style="color:#008000">  */</span></div><div style="position:absolute;left:564px;top:915.2px;width:9.5px;height:1.3px;background:#808080"></div><div style="position:absolute;left:444px;top:936.5px;width:105px;height:39px;line-height:39px;text-align:right;font-family:'Liberation Serif',serif;font-size:31px;letter-spacing:-0.6px;color:#262626;transform-origin:100% 50%">2554</div><div style="position:absolute;left:576.1px;top:938.6px;height:39px;line-height:39px;white-space:pre;font-family:'Liberation Mono',monospace;font-size:27.9px;letter-spacing:-0.2427px;-webkit-text-stroke:0.35px"><span style="color:#000">__weak </span><span style="color:#0000ff">void</span><span style="color:#000"> HAL_UART_TxHalfCpltCallback(UART_HandleTypeDef *huart)</span></div><div style="position:absolute;left:444px;top:975.5px;width:105px;height:39px;line-height:39px;text-align:right;font-family:'Liberation Serif',serif;font-size:31px;letter-spacing:-0.6px;color:#262626;transform-origin:100% 50%">2555</div><div style="position:absolute;left:576.1px;top:977.6px;height:39px;line-height:39px;white-space:pre;font-family:'Liberation Mono',monospace;font-size:27.9px;letter-spacing:-0.2427px;-webkit-text-stroke:0.35px"><span style="color:#000">{</span></div><div style="position:absolute;left:555.6px;top:984.4px;width:17.4px;height:16.8px;background:#f5f5f5;border:1.5px solid #858585"></div><div style="position:absolute;left:559.5px;top:992.5px;width:9.6px;height:1.5px;background:#808080"></div><div style="position:absolute;left:444px;top:1014.5px;width:105px;height:39px;line-height:39px;text-align:right;font-family:'Liberation Serif',serif;font-size:31px;letter-spacing:-0.6px;color:#262626;transform-origin:100% 50%">2556</div><div style="position:absolute;left:576.1px;top:1016.6px;height:39px;line-height:39px;white-space:pre;font-family:'Liberation Mono',monospace;font-size:27.9px;letter-spacing:-0.2427px;-webkit-text-stroke:0.35px"><span style="color:#008000">  /* Prevent unused argument(s) compilation warning */</span></div><div style="position:absolute;left:444px;top:1053.5px;width:105px;height:39px;line-height:39px;text-align:right;font-family:'Liberation Serif',serif;font-size:31px;letter-spacing:-0.6px;color:#262626;transform-origin:100% 50%">2557</div><div style="position:absolute;left:576.1px;top:1055.6px;height:39px;line-height:39px;white-space:pre;font-family:'Liberation Mono',monospace;font-size:27.9px;letter-spacing:-0.2427px;-webkit-text-stroke:0.35px"><span style="color:#000">  UNUSED(huart);</span></div></div>
<div style="position:absolute;left:444px;top:1067px;width:2078px;height:1px;background:#fbfbfb"></div>
<div style="position:absolute;left:444px;top:1068px;width:2078px;height:25.6px;background:#f0f0f0"></div>
<div style="position:absolute;left:469.8px;top:1068px;width:1319.5px;height:23.8px;background:#cdcdcd"></div>
<svg style="left:451px;top:1073.5px" width="10" height="12"><path d="M7.6 1.2L2 5.7l5.6 4.5" stroke="#5a5a5a" stroke-width="1.9" fill="none"/></svg>
<svg style="left:2509.5px;top:1073.5px" width="10" height="12"><path d="M1.6 1.2l5.600 4.500-5.600 4.500" stroke="#5a5a5a" stroke-width="1.9" fill="none"/></svg>
<div style="position:absolute;left:442px;top:1093.6px;width:2080px;height:2px;background:#fff"></div>
<div style="position:absolute;left:437px;top:1095.5px;width:2085px;height:3px;background:#b5a8c1"></div>
<div style="position:absolute;left:437px;top:1098.3px;width:2085px;height:1.5px;background:#aaa6ad"></div>
<div style="position:absolute;left:0px;top:1100px;width:2522px;height:6px;background:#fff"></div>
<div style="position:absolute;left:0px;top:1106px;width:2522px;height:27px;background:linear-gradient(#bccbdc,#d8e4f2)"></div>
<div style="position:absolute;left:6.8px;top:1112.62px;white-space:pre;line-height:18.99px;font-family:'Liberation Sans',sans-serif;font-size:17px;font-weight:normal;color:#000;letter-spacing:-0.697px;">Build Output</div>
<svg style="left:2511px;top:1113px" width="14" height="15" viewBox="0 0 14 15"><path d="M4 1.5h6.5M4.5 1.5v7M9 1.5v7M10 1.5v7M1.5 8.8h11M7 9v5.5" stroke="#000" stroke-width="1.5" fill="none"/></svg>
<div style="position:absolute;left:0px;top:1136px;width:2522px;height:1px;background:#9a9a9a"></div>
<div style="position:absolute;left:0px;top:1137px;width:2522px;height:1.7px;background:#6e6e6e"></div>
<svg style="left:0;top:0" width="430" height="1037"><path d="M27 202.5H34" stroke="#cdcdcd" stroke-width="1" stroke-dasharray="1 2"/><path d="M50.5 214V226" stroke="#cdcdcd" stroke-width="1" stroke-dasharray="1 2"/><path d="M57 232.5H66" stroke="#cdcdcd" stroke-width="1" stroke-dasharray="1 2"/><path d="M79.5 242V586" stroke="#cdcdcd" stroke-width="1" stroke-dasharray="1 2"/><path d="M87 262.5H96" stroke="#cdcdcd" stroke-width="1" stroke-dasharray="1 2"/><path d="M87 322.5H96" stroke="#cdcdcd" stroke-width="1" stroke-dasharray="1 2"/><path d="M87 532.5H96" stroke="#cdcdcd" stroke-width="1" stroke-dasharray="1 2"/><path d="M87 562.5H96" stroke="#cdcdcd" stroke-width="1" stroke-dasharray="1 2"/><path d="M87 592.5H96" stroke="#cdcdcd" stroke-width="1" stroke-dasharray="1 2"/><path d="M109.5 272V292" stroke="#cdcdcd" stroke-width="1" stroke-dasharray="1 2"/><path d="M110 292.5H126" stroke="#cdcdcd" stroke-width="1" stroke-dasharray="1 2"/><path d="M109.5 332V496" stroke="#cdcdcd" stroke-width="1" stroke-dasharray="1 2"/><path d="M117 352.5H126" stroke="#cdcdcd" stroke-width="1" stroke-dasharray="1 2"/><path d="M117 382.5H126" stroke="#cdcdcd" stroke-width="1" stroke-dasharray="1 2"/><path d="M117 472.5H126" stroke="#cdcdcd" stroke-width="1" stroke-dasharray="1 2"/><path d="M117 502.5H126" stroke="#cdcdcd" stroke-width="1" stroke-dasharray="1 2"/><path d="M111 412.5H122" stroke="#cdcdcd" stroke-width="1" stroke-dasharray="1 2"/><path d="M111 442.5H122" stroke="#cdcdcd" stroke-width="1" stroke-dasharray="1 2"/><path d="M109.5 602V1037" stroke="#cdcdcd" stroke-width="1" stroke-dasharray="1 2"/><path d="M111 622.5H126" stroke="#cdcdcd" stroke-width="1" stroke-dasharray="1 2"/><path d="M117 652.5H126" stroke="#cdcdcd" stroke-width="1" stroke-dasharray="1 2"/><path d="M111 682.5H126" stroke="#cdcdcd" stroke-width="1" stroke-dasharray="1 2"/><path d="M117 712.5H126" stroke="#cdcdcd" stroke-width="1" stroke-dasharray="1 2"/><path d="M111 742.5H126" stroke="#cdcdcd" stroke-width="1" stroke-dasharray="1 2"/><path d="M117 772.5H126" stroke="#cdcdcd" stroke-width="1" stroke-dasharray="1 2"/><path d="M111 802.5H126" stroke="#cdcdcd" stroke-width="1" stroke-dasharray="1 2"/><path d="M111 832.5H126" stroke="#cdcdcd" stroke-width="1" stroke-dasharray="1 2"/><path d="M117 862.5H126" stroke="#cdcdcd" stroke-width="1" stroke-dasharray="1 2"/><path d="M111 892.5H126" stroke="#cdcdcd" stroke-width="1" stroke-dasharray="1 2"/><path d="M117 922.5H126" stroke="#cdcdcd" stroke-width="1" stroke-dasharray="1 2"/><path d="M111 952.5H126" stroke="#cdcdcd" stroke-width="1" stroke-dasharray="1 2"/><path d="M117 982.5H126" stroke="#cdcdcd" stroke-width="1" stroke-dasharray="1 2"/><path d="M111 1012.5H126" stroke="#cdcdcd" stroke-width="1" stroke-dasharray="1 2"/></svg>
<div style="position:absolute;left:155px;top:428px;width:246px;height:29px;background:#efefef"></div>
<svg style="left:15px;top:197px" width="12" height="12" viewBox="0 0 12 12"><rect x=".5" y=".5" width="10.6" height="10.6" rx="1.5" fill="#f7f7f7" stroke="#b3b3b3"/><path d="M2.7 5.8h6.2" stroke="#3b4f8f" stroke-width="1.5"/></svg>
<svg style="left:34px;top:188px" width="24" height="23" viewBox="0 0 24 23">
<path d="M1 6L8.5 .5l5 5L6 11z" fill="#e5b131" stroke="#f6dc83" stroke-width=".8"/>
<path d="M12.5 13V5.5M12.5 17.5h4" stroke="#5d7fb3" stroke-width="1.4" fill="none"/><path d="M12.5 6v11.5" stroke="#5d7fb3" stroke-width="1.4"/>
<path d="M14 8.5l5.5-5 3 3-5.5 5z" fill="#c98bf0" stroke="#e4c4fa" stroke-width=".7"/>
<path d="M14.5 17.5l4-4.3 4 4.3-4 4.3z" fill="#5fa6ec" stroke="#9fd0fb" stroke-width=".7"/></svg>
<div style="position:absolute;left:69.5px;top:193.81px;white-space:pre;line-height:18.99px;font-family:'Liberation Sans',sans-serif;font-size:17px;font-weight:normal;color:#0c0407;letter-spacing:-0.346px;">Project: Test_v2</div>
<svg style="left:45px;top:227px" width="12" height="12" viewBox="0 0 12 12"><rect x=".5" y=".5" width="10.6" height="10.6" rx="1.5" fill="#f7f7f7" stroke="#b3b3b3"/><path d="M2.7 5.8h6.2" stroke="#3b4f8f" stroke-width="1.5"/></svg>
<svg style="left:66px;top:221px" width="24" height="21" viewBox="0 0 24 21"><linearGradient id="g119" x1="0" y1="0" x2="1" y2="1"><stop offset="0" stop-color="#fbe9a0"/><stop offset=".5" stop-color="#f3c94f"/><stop offset="1" stop-color="#c58f1e"/></linearGradient><path d="M1 19.5V2.2l1.2-1.2h6.3l1.8 2.3h9.2v4" fill="#f7e7a6" stroke="#b8925a" stroke-width="1.2"/><path d="M1.2 19.6L5.6 7.2h17.2l-3.6 12.4z" fill="url(#g119)" stroke="#8d6a35" stroke-width="1.2"/><path d="M6.4 8.4h14.8" stroke="#fff3c4" stroke-width="1"/></svg>
<svg style="left:64px;top:227.5px" width="14" height="14" viewBox="-7 -7 14 14"><g stroke="#000" stroke-width="1.7" fill="none"><path d="M-5.6 0h11.2M0-5.6v11.2M-4.032-4.032l8.064 8.064M4.032-4.032l-8.064 8.064"/></g><circle r="2.3" fill="#fff" stroke="#000" stroke-width="1.2"/><circle r=".8" fill="#000"/></svg>
<div style="position:absolute;left:99.4px;top:223.81px;white-space:pre;line-height:18.99px;font-family:'Liberation Sans',sans-serif;font-size:17px;font-weight:normal;color:#0c0407;letter-spacing:-0.571px;">Test_v2</div>
<svg style="left:75px;top:257px" width="12" height="12" viewBox="0 0 12 12"><rect x=".5" y=".5" width="10.6" height="10.6" rx="1.5" fill="#f7f7f7" stroke="#b3b3b3"/><path d="M2.7 5.8h6.2" stroke="#3b4f8f" stroke-width="1.5"/></svg>
<svg style="left:96px;top:249px" width="24" height="21" viewBox="0 0 24 21"><linearGradient id="g123" x1="0" y1="0" x2="1" y2="1"><stop offset="0" stop-color="#fbe9a0"/><stop offset=".5" stop-color="#f3c94f"/><stop offset="1" stop-color="#c58f1e"/></linearGradient><path d="M1 19.5V2.2l1.2-1.2h6.3l1.8 2.3h9.2v4" fill="#f7e7a6" stroke="#b8925a" stroke-width="1.2"/><path d="M1.2 19.6L5.6 7.2h17.2l-3.6 12.4z" fill="url(#g123)" stroke="#8d6a35" stroke-width="1.2"/><path d="M6.4 8.4h14.8" stroke="#fff3c4" stroke-width="1"/></svg>
<div style="position:absolute;left:129.8px;top:253.81px;white-space:pre;line-height:18.99px;font-family:'Liberation Sans',sans-serif;font-size:17px;font-weight:normal;color:#0c0407;letter-spacing:0.389px;">Application/MDK-ARM</div>
<svg style="left:127.3px;top:278.4px" width="18" height="21.8" viewBox="0 0 17.5 21.5"><linearGradient id="f125" x1="0" y1="0" x2="1" y2="1"><stop offset="0" stop-color="#fff"/><stop offset=".55" stop-color="#f4f7fd"/><stop offset="1" stop-color="#b9cdf0"/></linearGradient><path d="M.7 .7h11l5 5v15H.7z" fill="url(#f125)"/><path d="M.7 20.7V.7h11" fill="none" stroke="#b4bccb" stroke-width="1.1"/><path d="M11.7 .7l5 5v15H.7" fill="none" stroke="#4f6389" stroke-width="1.4"/><path d="M11.7 .9v4.8h4.8" fill="#dfe8f8" stroke="#6a7da3" stroke-width="1"/><pattern id="p125" width="2" height="2" patternUnits="userSpaceOnUse"><rect width="1" height="1" fill="#9a9a9a"/><rect x="1" y="1" width="1" height="1" fill="#9a9a9a"/></pattern><path d="M2.5 2.5h5l4 7.5-4 8h-5z" fill="url(#p125)" opacity=".75"/></svg>
<div style="position:absolute;left:159.5px;top:283.81px;white-space:pre;line-height:18.99px;font-family:'Liberation Sans',sans-serif;font-size:17px;font-weight:normal;color:#0c0407;letter-spacing:-0.203px;">startup_stm32g431xx.s</div>
<svg style="left:75px;top:317px" width="12" height="12" viewBox="0 0 12 12"><rect x=".5" y=".5" width="10.6" height="10.6" rx="1.5" fill="#f7f7f7" stroke="#b3b3b3"/><path d="M2.7 5.8h6.2" stroke="#3b4f8f" stroke-width="1.5"/></svg>
<svg style="left:96px;top:309px" width="24" height="21" viewBox="0 0 24 21"><linearGradient id="g128" x1="0" y1="0" x2="1" y2="1"><stop offset="0" stop-color="#fbe9a0"/><stop offset=".5" stop-color="#f3c94f"/><stop offset="1" stop-color="#c58f1e"/></linearGradient><path d="M1 19.5V2.2l1.2-1.2h6.3l1.8 2.3h9.2v4" fill="#f7e7a6" stroke="#b8925a" stroke-width="1.2"/><path d="M1.2 19.6L5.6 7.2h17.2l-3.6 12.4z" fill="url(#g128)" stroke="#8d6a35" stroke-width="1.2"/><path d="M6.4 8.4h14.8" stroke="#fff3c4" stroke-width="1"/></svg>
<div style="position:absolute;left:129.8px;top:313.81px;white-space:pre;line-height:18.99px;font-family:'Liberation Sans',sans-serif;font-size:17px;font-weight:normal;color:#0c0407;letter-spacing:0.221px;">Application/User/Core</div>
<svg style="left:105px;top:347px" width="12" height="12" viewBox="0 0 12 12"><rect x=".5" y=".5" width="10.6" height="10.6" rx="1.5" fill="#f7f7f7" stroke="#b3b3b3"/><path d="M2.7 5.8h6.2" stroke="#3b4f8f" stroke-width="1.5"/><path d="M5.8 2.7v6.2" stroke="#3b4f8f" stroke-width="1.5"/></svg>
<svg style="left:127.3px;top:338.4px" width="18" height="21.8" viewBox="0 0 17.5 21.5"><linearGradient id="f131" x1="0" y1="0" x2="1" y2="1"><stop offset="0" stop-color="#fff"/><stop offset=".55" stop-color="#f4f7fd"/><stop offset="1" stop-color="#b9cdf0"/></linearGradient><path d="M.7 .7h11l5 5v15H.7z" fill="url(#f131)"/><path d="M.7 20.7V.7h11" fill="none" stroke="#b4bccb" stroke-width="1.1"/><path d="M11.7 .7l5 5v15H.7" fill="none" stroke="#4f6389" stroke-width="1.4"/><path d="M11.7 .9v4.8h4.8" fill="#dfe8f8" stroke="#6a7da3" stroke-width="1"/><pattern id="p131" width="2" height="2" patternUnits="userSpaceOnUse"><rect width="1" height="1" fill="#9a9a9a"/><rect x="1" y="1" width="1" height="1" fill="#9a9a9a"/></pattern><path d="M2.5 2.5h5l4 7.5-4 8h-5z" fill="url(#p131)" opacity=".75"/></svg>
<div style="position:absolute;left:159.5px;top:343.81px;white-space:pre;line-height:18.99px;font-family:'Liberation Sans',sans-serif;font-size:17px;font-weight:normal;color:#0c0407;letter-spacing:-0.096px;">main.c</div>
<svg style="left:105px;top:377px" width="12" height="12" viewBox="0 0 12 12"><rect x=".5" y=".5" width="10.6" height="10.6" rx="1.5" fill="#f7f7f7" stroke="#b3b3b3"/><path d="M2.7 5.8h6.2" stroke="#3b4f8f" stroke-width="1.5"/><path d="M5.8 2.7v6.2" stroke="#3b4f8f" stroke-width="1.5"/></svg>
<svg style="left:127.3px;top:368.4px" width="18" height="21.8" viewBox="0 0 17.5 21.5"><linearGradient id="f134" x1="0" y1="0" x2="1" y2="1"><stop offset="0" stop-color="#fff"/><stop offset=".55" stop-color="#f4f7fd"/><stop offset="1" stop-color="#b9cdf0"/></linearGradient><path d="M.7 .7h11l5 5v15H.7z" fill="url(#f134)"/><path d="M.7 20.7V.7h11" fill="none" stroke="#b4bccb" stroke-width="1.1"/><path d="M11.7 .7l5 5v15H.7" fill="none" stroke="#4f6389" stroke-width="1.4"/><path d="M11.7 .9v4.8h4.8" fill="#dfe8f8" stroke="#6a7da3" stroke-width="1"/><pattern id="p134" width="2" height="2" patternUnits="userSpaceOnUse"><rect width="1" height="1" fill="#9a9a9a"/><rect x="1" y="1" width="1" height="1" fill="#9a9a9a"/></pattern><path d="M2.5 2.5h5l4 7.5-4 8h-5z" fill="url(#p134)" opacity=".75"/></svg>
<div style="position:absolute;left:159.5px;top:373.81px;white-space:pre;line-height:18.99px;font-family:'Liberation Sans',sans-serif;font-size:17px;font-weight:normal;color:#0c0407;letter-spacing:0.171px;">gpio.c</div>
<svg style="left:127.3px;top:398.4px" width="18" height="21.8" viewBox="0 0 17.5 21.5"><linearGradient id="f136" x1="0" y1="0" x2="1" y2="1"><stop offset="0" stop-color="#fff"/><stop offset=".55" stop-color="#f4f7fd"/><stop offset="1" stop-color="#b9cdf0"/></linearGradient><path d="M.7 .7h11l5 5v15H.7z" fill="url(#f136)"/><path d="M.7 20.7V.7h11" fill="none" stroke="#b4bccb" stroke-width="1.1"/><path d="M11.7 .7l5 5v15H.7" fill="none" stroke="#4f6389" stroke-width="1.4"/><path d="M11.7 .9v4.8h4.8" fill="#dfe8f8" stroke="#6a7da3" stroke-width="1"/><pattern id="p136" width="2" height="2" patternUnits="userSpaceOnUse"><rect width="1" height="1" fill="#9a9a9a"/><rect x="1" y="1" width="1" height="1" fill="#9a9a9a"/></pattern><path d="M2.5 2.5h5l4 7.5-4 8h-5z" fill="url(#p136)" opacity=".75"/></svg>
<svg style="left:122.8px;top:407.6px" width="14" height="14" viewBox="-7 -7 14 14"><g stroke="#000" stroke-width="1.7" fill="none"><path d="M-5.6 0h11.2M0-5.6v11.2M-4.032-4.032l8.064 8.064M4.032-4.032l-8.064 8.064"/></g><circle r="2.3" fill="#fff" stroke="#000" stroke-width="1.2"/><circle r=".8" fill="#000"/></svg>
<div style="position:absolute;left:159.5px;top:403.81px;white-space:pre;line-height:18.99px;font-family:'Liberation Sans',sans-serif;font-size:17px;font-weight:normal;color:#0c0407;letter-spacing:-0.359px;">dma.c</div>
<svg style="left:127.3px;top:428.4px" width="18" height="21.8" viewBox="0 0 17.5 21.5"><linearGradient id="f139" x1="0" y1="0" x2="1" y2="1"><stop offset="0" stop-color="#fff"/><stop offset=".55" stop-color="#f4f7fd"/><stop offset="1" stop-color="#b9cdf0"/></linearGradient><path d="M.7 .7h11l5 5v15H.7z" fill="url(#f139)"/><path d="M.7 20.7V.7h11" fill="none" stroke="#b4bccb" stroke-width="1.1"/><path d="M11.7 .7l5 5v15H.7" fill="none" stroke="#4f6389" stroke-width="1.4"/><path d="M11.7 .9v4.8h4.8" fill="#dfe8f8" stroke="#6a7da3" stroke-width="1"/><pattern id="p139" width="2" height="2" patternUnits="userSpaceOnUse"><rect width="1" height="1" fill="#9a9a9a"/><rect x="1" y="1" width="1" height="1" fill="#9a9a9a"/></pattern><path d="M2.5 2.5h5l4 7.5-4 8h-5z" fill="url(#p139)" opacity=".75"/></svg>
<svg style="left:122.8px;top:437.6px" width="14" height="14" viewBox="-7 -7 14 14"><g stroke="#000" stroke-width="1.7" fill="none"><path d="M-5.6 0h11.2M0-5.6v11.2M-4.032-4.032l8.064 8.064M4.032-4.032l-8.064 8.064"/></g><circle r="2.3" fill="#fff" stroke="#000" stroke-width="1.2"/><circle r=".8" fill="#000"/></svg>
<div style="position:absolute;left:159.5px;top:433.81px;white-space:pre;line-height:18.99px;font-family:'Liberation Sans',sans-serif;font-size:17px;font-weight:normal;color:#0c0407;letter-spacing:-0.219px;">usart.c</div>
<svg style="left:105px;top:467px" width="12" height="12" viewBox="0 0 12 12"><rect x=".5" y=".5" width="10.6" height="10.6" rx="1.5" fill="#f7f7f7" stroke="#b3b3b3"/><path d="M2.7 5.8h6.2" stroke="#3b4f8f" stroke-width="1.5"/><path d="M5.8 2.7v6.2" stroke="#3b4f8f" stroke-width="1.5"/></svg>
<svg style="left:127.3px;top:458.4px" width="18" height="21.8" viewBox="0 0 17.5 21.5"><linearGradient id="f143" x1="0" y1="0" x2="1" y2="1"><stop offset="0" stop-color="#fff"/><stop offset=".55" stop-color="#f4f7fd"/><stop offset="1" stop-color="#b9cdf0"/></linearGradient><path d="M.7 .7h11l5 5v15H.7z" fill="url(#f143)"/><path d="M.7 20.7V.7h11" fill="none" stroke="#b4bccb" stroke-width="1.1"/><path d="M11.7 .7l5 5v15H.7" fill="none" stroke="#4f6389" stroke-width="1.4"/><path d="M11.7 .9v4.8h4.8" fill="#dfe8f8" stroke="#6a7da3" stroke-width="1"/><pattern id="p143" width="2" height="2" patternUnits="userSpaceOnUse"><rect width="1" height="1" fill="#9a9a9a"/><rect x="1" y="1" width="1" height="1" fill="#9a9a9a"/></pattern><path d="M2.5 2.5h5l4 7.5-4 8h-5z" fill="url(#p143)" opacity=".75"/></svg>
<div style="position:absolute;left:159.5px;top:463.81px;white-space:pre;line-height:18.99px;font-family:'Liberation Sans',sans-serif;font-size:17px;font-weight:normal;color:#0c0407;letter-spacing:-0.292px;">stm32g4xx_it.c</div>
<svg style="left:105px;top:497px" width="12" height="12" viewBox="0 0 12 12"><rect x=".5" y=".5" width="10.6" height="10.6" rx="1.5" fill="#f7f7f7" stroke="#b3b3b3"/><path d="M2.7 5.8h6.2" stroke="#3b4f8f" stroke-width="1.5"/><path d="M5.8 2.7v6.2" stroke="#3b4f8f" stroke-width="1.5"/></svg>
<svg style="left:127.3px;top:488.4px" width="18" height="21.8" viewBox="0 0 17.5 21.5"><linearGradient id="f146" x1="0" y1="0" x2="1" y2="1"><stop offset="0" stop-color="#fff"/><stop offset=".55" stop-color="#f4f7fd"/><stop offset="1" stop-color="#b9cdf0"/></linearGradient><path d="M.7 .7h11l5 5v15H.7z" fill="url(#f146)"/><path d="M.7 20.7V.7h11" fill="none" stroke="#b4bccb" stroke-width="1.1"/><path d="M11.7 .7l5 5v15H.7" fill="none" stroke="#4f6389" stroke-width="1.4"/><path d="M11.7 .9v4.8h4.8" fill="#dfe8f8" stroke="#6a7da3" stroke-width="1"/><pattern id="p146" width="2" height="2" patternUnits="userSpaceOnUse"><rect width="1" height="1" fill="#9a9a9a"/><rect x="1" y="1" width="1" height="1" fill="#9a9a9a"/></pattern><path d="M2.5 2.5h5l4 7.5-4 8h-5z" fill="url(#p146)" opacity=".75"/></svg>
<div style="position:absolute;left:159.5px;top:493.81px;white-space:pre;line-height:18.99px;font-family:'Liberation Sans',sans-serif;font-size:17px;font-weight:normal;color:#0c0407;letter-spacing:-0.297px;">stm32g4xx_hal_msp.c</div>
<svg style="left:75px;top:527px" width="12" height="12" viewBox="0 0 12 12"><rect x=".5" y=".5" width="10.6" height="10.6" rx="1.5" fill="#f7f7f7" stroke="#b3b3b3"/><path d="M2.7 5.8h6.2" stroke="#3b4f8f" stroke-width="1.5"/><path d="M5.8 2.7v6.2" stroke="#3b4f8f" stroke-width="1.5"/></svg>
<svg style="left:96px;top:519px" width="24" height="21" viewBox="0 0 24 21"><linearGradient id="g149" x1="0" y1="0" x2="1" y2="1"><stop offset="0" stop-color="#fbe9a0"/><stop offset=".5" stop-color="#f3c94f"/><stop offset="1" stop-color="#c58f1e"/></linearGradient><path d="M1 19V2.2l1.2-1.2h6.3l1.8 2.3h10.5v15.7z" fill="#f4dc8c" stroke="#b8925a" stroke-width="1.2"/><path d="M1.2 6.2h20v13.3h-20z" fill="url(#g149)" stroke="#b48a45" stroke-width="1"/><path d="M2 7h18.5" stroke="#fff6d0" stroke-width="1"/></svg>
<div style="position:absolute;left:129.8px;top:523.82px;white-space:pre;line-height:18.99px;font-family:'Liberation Sans',sans-serif;font-size:17px;font-weight:normal;color:#0c0407;letter-spacing:-0.398px;">Drivers/STM32G4xx_HAL_Driver</div>
<svg style="left:75px;top:557px" width="12" height="12" viewBox="0 0 12 12"><rect x=".5" y=".5" width="10.6" height="10.6" rx="1.5" fill="#f7f7f7" stroke="#b3b3b3"/><path d="M2.7 5.8h6.2" stroke="#3b4f8f" stroke-width="1.5"/><path d="M5.8 2.7v6.2" stroke="#3b4f8f" stroke-width="1.5"/></svg>
<svg style="left:96px;top:549px" width="24" height="21" viewBox="0 0 24 21"><linearGradient id="g152" x1="0" y1="0" x2="1" y2="1"><stop offset="0" stop-color="#fbe9a0"/><stop offset=".5" stop-color="#f3c94f"/><stop offset="1" stop-color="#c58f1e"/></linearGradient><path d="M1 19V2.2l1.2-1.2h6.3l1.8 2.3h10.5v15.7z" fill="#f4dc8c" stroke="#b8925a" stroke-width="1.2"/><path d="M1.2 6.2h20v13.3h-20z" fill="url(#g152)" stroke="#b48a45" stroke-width="1"/><path d="M2 7h18.5" stroke="#fff6d0" stroke-width="1"/></svg>
<div style="position:absolute;left:129.8px;top:553.82px;white-space:pre;line-height:18.99px;font-family:'Liberation Sans',sans-serif;font-size:17px;font-weight:normal;color:#0c0407;letter-spacing:-0.270px;">Drivers/CMSIS</div>
<svg style="left:75px;top:587px" width="12" height="12" viewBox="0 0 12 12"><rect x=".5" y=".5" width="10.6" height="10.6" rx="1.5" fill="#f7f7f7" stroke="#b3b3b3"/><path d="M2.7 5.8h6.2" stroke="#3b4f8f" stroke-width="1.5"/></svg>
<svg style="left:96px;top:579px" width="24" height="21" viewBox="0 0 24 21"><linearGradient id="g155" x1="0" y1="0" x2="1" y2="1"><stop offset="0" stop-color="#fbe9a0"/><stop offset=".5" stop-color="#f3c94f"/><stop offset="1" stop-color="#c58f1e"/></linearGradient><path d="M1 19.5V2.2l1.2-1.2h6.3l1.8 2.3h9.2v4" fill="#f7e7a6" stroke="#b8925a" stroke-width="1.2"/><path d="M1.2 19.6L5.6 7.2h17.2l-3.6 12.4z" fill="url(#g155)" stroke="#8d6a35" stroke-width="1.2"/><path d="M6.4 8.4h14.8" stroke="#fff3c4" stroke-width="1"/></svg>
<div style="position:absolute;left:129.8px;top:583.82px;white-space:pre;line-height:18.99px;font-family:'Liberation Sans',sans-serif;font-size:17px;font-weight:normal;color:#0c0407;letter-spacing:-0.125px;">Hardware</div>
<svg style="left:127.3px;top:608.4px" width="18" height="21.8" viewBox="0 0 17.5 21.5"><linearGradient id="f157" x1="0" y1="0" x2="1" y2="1"><stop offset="0" stop-color="#fff"/><stop offset=".55" stop-color="#f4f7fd"/><stop offset="1" stop-color="#b9cdf0"/></linearGradient><path d="M.7 .7h11l5 5v15H.7z" fill="url(#f157)"/><path d="M.7 20.7V.7h11" fill="none" stroke="#b4bccb" stroke-width="1.1"/><path d="M11.7 .7l5 5v15H.7" fill="none" stroke="#4f6389" stroke-width="1.4"/><path d="M11.7 .9v4.8h4.8" fill="#dfe8f8" stroke="#6a7da3" stroke-width="1"/></svg>
<div style="position:absolute;left:159.5px;top:613.82px;white-space:pre;line-height:18.99px;font-family:'Liberation Sans',sans-serif;font-size:17px;font-weight:normal;color:#0c0407;letter-spacing:-0.224px;">bsp_system.h</div>
<svg style="left:105px;top:647px" width="12" height="12" viewBox="0 0 12 12"><rect x=".5" y=".5" width="10.6" height="10.6" rx="1.5" fill="#f7f7f7" stroke="#b3b3b3"/><path d="M2.7 5.8h6.2" stroke="#3b4f8f" stroke-width="1.5"/><path d="M5.8 2.7v6.2" stroke="#3b4f8f" stroke-width="1.5"/></svg>
<svg style="left:127.3px;top:638.4px" width="18" height="21.8" viewBox="0 0 17.5 21.5"><linearGradient id="f160" x1="0" y1="0" x2="1" y2="1"><stop offset="0" stop-color="#fff"/><stop offset=".55" stop-color="#f4f7fd"/><stop offset="1" stop-color="#b9cdf0"/></linearGradient><path d="M.7 .7h11l5 5v15H.7z" fill="url(#f160)"/><path d="M.7 20.7V.7h11" fill="none" stroke="#b4bccb" stroke-width="1.1"/><path d="M11.7 .7l5 5v15H.7" fill="none" stroke="#4f6389" stroke-width="1.4"/><path d="M11.7 .9v4.8h4.8" fill="#dfe8f8" stroke="#6a7da3" stroke-width="1"/><pattern id="p160" width="2" height="2" patternUnits="userSpaceOnUse"><rect width="1" height="1" fill="#9a9a9a"/><rect x="1" y="1" width="1" height="1" fill="#9a9a9a"/></pattern><path d="M2.5 2.5h5l4 7.5-4 8h-5z" fill="url(#p160)" opacity=".75"/></svg>
<div style="position:absolute;left:159.5px;top:643.82px;white-space:pre;line-height:18.99px;font-family:'Liberation Sans',sans-serif;font-size:17px;font-weight:normal;color:#0c0407;letter-spacing:-0.073px;">scheduler.c</div>
<svg style="left:127.3px;top:668.4px" width="18" height="21.8" viewBox="0 0 17.5 21.5"><linearGradient id="f162" x1="0" y1="0" x2="1" y2="1"><stop offset="0" stop-color="#fff"/><stop offset=".55" stop-color="#f4f7fd"/><stop offset="1" stop-color="#b9cdf0"/></linearGradient><path d="M.7 .7h11l5 5v15H.7z" fill="url(#f162)"/><path d="M.7 20.7V.7h11" fill="none" stroke="#b4bccb" stroke-width="1.1"/><path d="M11.7 .7l5 5v15H.7" fill="none" stroke="#4f6389" stroke-width="1.4"/><path d="M11.7 .9v4.8h4.8" fill="#dfe8f8" stroke="#6a7da3" stroke-width="1"/></svg>
<div style="position:absolute;left:159.5px;top:673.82px;white-space:pre;line-height:18.99px;font-family:'Liberation Sans',sans-serif;font-size:17px;font-weight:normal;color:#0c0407;letter-spacing:0.032px;">scheduler.h</div>
<svg style="left:105px;top:707px" width="12" height="12" viewBox="0 0 12 12"><rect x=".5" y=".5" width="10.6" height="10.6" rx="1.5" fill="#f7f7f7" stroke="#b3b3b3"/><path d="M2.7 5.8h6.2" stroke="#3b4f8f" stroke-width="1.5"/><path d="M5.8 2.7v6.2" stroke="#3b4f8f" stroke-width="1.5"/></svg>
<svg style="left:127.3px;top:698.4px" width="18" height="21.8" viewBox="0 0 17.5 21.5"><linearGradient id="f165" x1="0" y1="0" x2="1" y2="1"><stop offset="0" stop-color="#fff"/><stop offset=".55" stop-color="#f4f7fd"/><stop offset="1" stop-color="#b9cdf0"/></linearGradient><path d="M.7 .7h11l5 5v15H.7z" fill="url(#f165)"/><path d="M.7 20.7V.7h11" fill="none" stroke="#b4bccb" stroke-width="1.1"/><path d="M11.7 .7l5 5v15H.7" fill="none" stroke="#4f6389" stroke-width="1.4"/><path d="M11.7 .9v4.8h4.8" fill="#dfe8f8" stroke="#6a7da3" stroke-width="1"/><pattern id="p165" width="2" height="2" patternUnits="userSpaceOnUse"><rect width="1" height="1" fill="#9a9a9a"/><rect x="1" y="1" width="1" height="1" fill="#9a9a9a"/></pattern><path d="M2.5 2.5h5l4 7.5-4 8h-5z" fill="url(#p165)" opacity=".75"/></svg>
<div style="position:absolute;left:159.5px;top:703.82px;white-space:pre;line-height:18.99px;font-family:'Liberation Sans',sans-serif;font-size:17px;font-weight:normal;color:#0c0407;letter-spacing:-0.358px;">system.c</div>
<svg style="left:127.3px;top:728.4px" width="18" height="21.8" viewBox="0 0 17.5 21.5"><linearGradient id="f167" x1="0" y1="0" x2="1" y2="1"><stop offset="0" stop-color="#fff"/><stop offset=".55" stop-color="#f4f7fd"/><stop offset="1" stop-color="#b9cdf0"/></linearGradient><path d="M.7 .7h11l5 5v15H.7z" fill="url(#f167)"/><path d="M.7 20.7V.7h11" fill="none" stroke="#b4bccb" stroke-width="1.1"/><path d="M11.7 .7l5 5v15H.7" fill="none" stroke="#4f6389" stroke-width="1.4"/><path d="M11.7 .9v4.8h4.8" fill="#dfe8f8" stroke="#6a7da3" stroke-width="1"/></svg>
<div style="position:absolute;left:159.5px;top:733.82px;white-space:pre;line-height:18.99px;font-family:'Liberation Sans',sans-serif;font-size:17px;font-weight:normal;color:#0c0407;letter-spacing:-0.229px;">system.h</div>
<svg style="left:105px;top:767px" width="12" height="12" viewBox="0 0 12 12"><rect x=".5" y=".5" width="10.6" height="10.6" rx="1.5" fill="#f7f7f7" stroke="#b3b3b3"/><path d="M2.7 5.8h6.2" stroke="#3b4f8f" stroke-width="1.5"/><path d="M5.8 2.7v6.2" stroke="#3b4f8f" stroke-width="1.5"/></svg>
<svg style="left:127.3px;top:758.4px" width="18" height="21.8" viewBox="0 0 17.5 21.5"><linearGradient id="f170" x1="0" y1="0" x2="1" y2="1"><stop offset="0" stop-color="#fff"/><stop offset=".55" stop-color="#f4f7fd"/><stop offset="1" stop-color="#b9cdf0"/></linearGradient><path d="M.7 .7h11l5 5v15H.7z" fill="url(#f170)"/><path d="M.7 20.7V.7h11" fill="none" stroke="#b4bccb" stroke-width="1.1"/><path d="M11.7 .7l5 5v15H.7" fill="none" stroke="#4f6389" stroke-width="1.4"/><path d="M11.7 .9v4.8h4.8" fill="#dfe8f8" stroke="#6a7da3" stroke-width="1"/><pattern id="p170" width="2" height="2" patternUnits="userSpaceOnUse"><rect width="1" height="1" fill="#9a9a9a"/><rect x="1" y="1" width="1" height="1" fill="#9a9a9a"/></pattern><path d="M2.5 2.5h5l4 7.5-4 8h-5z" fill="url(#p170)" opacity=".75"/></svg>
<div style="position:absolute;left:159.5px;top:763.82px;white-space:pre;line-height:18.99px;font-family:'Liberation Sans',sans-serif;font-size:17px;font-weight:normal;color:#0c0407;letter-spacing:-0.170px;">led_app.c</div>
<svg style="left:127.3px;top:788.4px" width="18" height="21.8" viewBox="0 0 17.5 21.5"><linearGradient id="f172" x1="0" y1="0" x2="1" y2="1"><stop offset="0" stop-color="#fff"/><stop offset=".55" stop-color="#f4f7fd"/><stop offset="1" stop-color="#b9cdf0"/></linearGradient><path d="M.7 .7h11l5 5v15H.7z" fill="url(#f172)"/><path d="M.7 20.7V.7h11" fill="none" stroke="#b4bccb" stroke-width="1.1"/><path d="M11.7 .7l5 5v15H.7" fill="none" stroke="#4f6389" stroke-width="1.4"/><path d="M11.7 .9v4.8h4.8" fill="#dfe8f8" stroke="#6a7da3" stroke-width="1"/></svg>
<div style="position:absolute;left:159.5px;top:793.82px;white-space:pre;line-height:18.99px;font-family:'Liberation Sans',sans-serif;font-size:17px;font-weight:normal;color:#0c0407;letter-spacing:-0.099px;">led_app.h</div>
<svg style="left:127.3px;top:818.4px" width="18" height="21.8" viewBox="0 0 17.5 21.5"><linearGradient id="f174" x1="0" y1="0" x2="1" y2="1"><stop offset="0" stop-color="#fff"/><stop offset=".55" stop-color="#f4f7fd"/><stop offset="1" stop-color="#b9cdf0"/></linearGradient><path d="M.7 .7h11l5 5v15H.7z" fill="url(#f174)"/><path d="M.7 20.7V.7h11" fill="none" stroke="#b4bccb" stroke-width="1.1"/><path d="M11.7 .7l5 5v15H.7" fill="none" stroke="#4f6389" stroke-width="1.4"/><path d="M11.7 .9v4.8h4.8" fill="#dfe8f8" stroke="#6a7da3" stroke-width="1"/></svg>
<div style="position:absolute;left:159.5px;top:823.82px;white-space:pre;line-height:18.99px;font-family:'Liberation Sans',sans-serif;font-size:17px;font-weight:normal;color:#0c0407;letter-spacing:0.208px;">fonts.h</div>
<svg style="left:105px;top:857px" width="12" height="12" viewBox="0 0 12 12"><rect x=".5" y=".5" width="10.6" height="10.6" rx="1.5" fill="#f7f7f7" stroke="#b3b3b3"/><path d="M2.7 5.8h6.2" stroke="#3b4f8f" stroke-width="1.5"/><path d="M5.8 2.7v6.2" stroke="#3b4f8f" stroke-width="1.5"/></svg>
<svg style="left:127.3px;top:848.4px" width="18" height="21.8" viewBox="0 0 17.5 21.5"><linearGradient id="f177" x1="0" y1="0" x2="1" y2="1"><stop offset="0" stop-color="#fff"/><stop offset=".55" stop-color="#f4f7fd"/><stop offset="1" stop-color="#b9cdf0"/></linearGradient><path d="M.7 .7h11l5 5v15H.7z" fill="url(#f177)"/><path d="M.7 20.7V.7h11" fill="none" stroke="#b4bccb" stroke-width="1.1"/><path d="M11.7 .7l5 5v15H.7" fill="none" stroke="#4f6389" stroke-width="1.4"/><path d="M11.7 .9v4.8h4.8" fill="#dfe8f8" stroke="#6a7da3" stroke-width="1"/><pattern id="p177" width="2" height="2" patternUnits="userSpaceOnUse"><rect width="1" height="1" fill="#9a9a9a"/><rect x="1" y="1" width="1" height="1" fill="#9a9a9a"/></pattern><path d="M2.5 2.5h5l4 7.5-4 8h-5z" fill="url(#p177)" opacity=".75"/></svg>
<div style="position:absolute;left:159.5px;top:853.82px;white-space:pre;line-height:18.99px;font-family:'Liberation Sans',sans-serif;font-size:17px;font-weight:normal;color:#0c0407;letter-spacing:-0.311px;">key_app.c</div>
<svg style="left:127.3px;top:878.4px" width="18" height="21.8" viewBox="0 0 17.5 21.5"><linearGradient id="f179" x1="0" y1="0" x2="1" y2="1"><stop offset="0" stop-color="#fff"/><stop offset=".55" stop-color="#f4f7fd"/><stop offset="1" stop-color="#b9cdf0"/></linearGradient><path d="M.7 .7h11l5 5v15H.7z" fill="url(#f179)"/><path d="M.7 20.7V.7h11" fill="none" stroke="#b4bccb" stroke-width="1.1"/><path d="M11.7 .7l5 5v15H.7" fill="none" stroke="#4f6389" stroke-width="1.4"/><path d="M11.7 .9v4.8h4.8" fill="#dfe8f8" stroke="#6a7da3" stroke-width="1"/></svg>
<div style="position:absolute;left:159.5px;top:883.82px;white-space:pre;line-height:18.99px;font-family:'Liberation Sans',sans-serif;font-size:17px;font-weight:normal;color:#0c0407;letter-spacing:-0.217px;">key_app.h</div>
<svg style="left:105px;top:917px" width="12" height="12" viewBox="0 0 12 12"><rect x=".5" y=".5" width="10.6" height="10.6" rx="1.5" fill="#f7f7f7" stroke="#b3b3b3"/><path d="M2.7 5.8h6.2" stroke="#3b4f8f" stroke-width="1.5"/><path d="M5.8 2.7v6.2" stroke="#3b4f8f" stroke-width="1.5"/></svg>
<svg style="left:127.3px;top:908.4px" width="18" height="21.8" viewBox="0 0 17.5 21.5"><linearGradient id="f182" x1="0" y1="0" x2="1" y2="1"><stop offset="0" stop-color="#fff"/><stop offset=".55" stop-color="#f4f7fd"/><stop offset="1" stop-color="#b9cdf0"/></linearGradient><path d="M.7 .7h11l5 5v15H.7z" fill="url(#f182)"/><path d="M.7 20.7V.7h11" fill="none" stroke="#b4bccb" stroke-width="1.1"/><path d="M11.7 .7l5 5v15H.7" fill="none" stroke="#4f6389" stroke-width="1.4"/><path d="M11.7 .9v4.8h4.8" fill="#dfe8f8" stroke="#6a7da3" stroke-width="1"/><pattern id="p182" width="2" height="2" patternUnits="userSpaceOnUse"><rect width="1" height="1" fill="#9a9a9a"/><rect x="1" y="1" width="1" height="1" fill="#9a9a9a"/></pattern><path d="M2.5 2.5h5l4 7.5-4 8h-5z" fill="url(#p182)" opacity=".75"/></svg>
<div style="position:absolute;left:159.5px;top:913.82px;white-space:pre;line-height:18.99px;font-family:'Liberation Sans',sans-serif;font-size:17px;font-weight:normal;color:#0c0407;letter-spacing:-0.454px;">lcd.c</div>
<svg style="left:127.3px;top:938.4px" width="18" height="21.8" viewBox="0 0 17.5 21.5"><linearGradient id="f184" x1="0" y1="0" x2="1" y2="1"><stop offset="0" stop-color="#fff"/><stop offset=".55" stop-color="#f4f7fd"/><stop offset="1" stop-color="#b9cdf0"/></linearGradient><path d="M.7 .7h11l5 5v15H.7z" fill="url(#f184)"/><path d="M.7 20.7V.7h11" fill="none" stroke="#b4bccb" stroke-width="1.1"/><path d="M11.7 .7l5 5v15H.7" fill="none" stroke="#4f6389" stroke-width="1.4"/><path d="M11.7 .9v4.8h4.8" fill="#dfe8f8" stroke="#6a7da3" stroke-width="1"/></svg>
<div style="position:absolute;left:159.5px;top:943.82px;white-space:pre;line-height:18.99px;font-family:'Liberation Sans',sans-serif;font-size:17px;font-weight:normal;color:#0c0407;letter-spacing:-0.284px;">lcd.h</div>
<svg style="left:105px;top:977px" width="12" height="12" viewBox="0 0 12 12"><rect x=".5" y=".5" width="10.6" height="10.6" rx="1.5" fill="#f7f7f7" stroke="#b3b3b3"/><path d="M2.7 5.8h6.2" stroke="#3b4f8f" stroke-width="1.5"/><path d="M5.8 2.7v6.2" stroke="#3b4f8f" stroke-width="1.5"/></svg>
<svg style="left:127.3px;top:968.4px" width="18" height="21.8" viewBox="0 0 17.5 21.5"><linearGradient id="f187" x1="0" y1="0" x2="1" y2="1"><stop offset="0" stop-color="#fff"/><stop offset=".55" stop-color="#f4f7fd"/><stop offset="1" stop-color="#b9cdf0"/></linearGradient><path d="M.7 .7h11l5 5v15H.7z" fill="url(#f187)"/><path d="M.7 20.7V.7h11" fill="none" stroke="#b4bccb" stroke-width="1.1"/><path d="M11.7 .7l5 5v15H.7" fill="none" stroke="#4f6389" stroke-width="1.4"/><path d="M11.7 .9v4.8h4.8" fill="#dfe8f8" stroke="#6a7da3" stroke-width="1"/><pattern id="p187" width="2" height="2" patternUnits="userSpaceOnUse"><rect width="1" height="1" fill="#9a9a9a"/><rect x="1" y="1" width="1" height="1" fill="#9a9a9a"/></pattern><path d="M2.5 2.5h5l4 7.5-4 8h-5z" fill="url(#p187)" opacity=".75"/></svg>
<div style="position:absolute;left:159.5px;top:973.82px;white-space:pre;line-height:18.99px;font-family:'Liberation Sans',sans-serif;font-size:17px;font-weight:normal;color:#0c0407;letter-spacing:-0.253px;">lcd_app.c</div>
<svg style="left:127.3px;top:998.4px" width="18" height="21.8" viewBox="0 0 17.5 21.5"><linearGradient id="f189" x1="0" y1="0" x2="1" y2="1"><stop offset="0" stop-color="#fff"/><stop offset=".55" stop-color="#f4f7fd"/><stop offset="1" stop-color="#b9cdf0"/></linearGradient><path d="M.7 .7h11l5 5v15H.7z" fill="url(#f189)"/><path d="M.7 20.7V.7h11" fill="none" stroke="#b4bccb" stroke-width="1.1"/><path d="M11.7 .7l5 5v15H.7" fill="none" stroke="#4f6389" stroke-width="1.4"/><path d="M11.7 .9v4.8h4.8" fill="#dfe8f8" stroke="#6a7da3" stroke-width="1"/></svg>
<div style="position:absolute;left:159.5px;top:1003.82px;white-space:pre;line-height:18.99px;font-family:'Liberation Sans',sans-serif;font-size:17px;font-weight:normal;color:#0c0407;letter-spacing:-0.159px;">lcd_app.h</div>
<div style="position:absolute;left:127.3px;top:1028.4px;width:20px;height:8.6px;overflow:hidden">
<svg style="left:0px;top:0px" width="17.5" height="21.5" viewBox="0 0 17.5 21.5"><linearGradient id="f192" x1="0" y1="0" x2="1" y2="1"><stop offset="0" stop-color="#fff"/><stop offset=".55" stop-color="#f4f7fd"/><stop offset="1" stop-color="#b9cdf0"/></linearGradient><path d="M.7 .7h11l5 5v15H.7z" fill="url(#f192)"/><path d="M.7 20.7V.7h11" fill="none" stroke="#b4bccb" stroke-width="1.1"/><path d="M11.7 .7l5 5v15H.7" fill="none" stroke="#4f6389" stroke-width="1.4"/><path d="M11.7 .9v4.8h4.8" fill="#dfe8f8" stroke="#6a7da3" stroke-width="1"/><pattern id="p192" width="2" height="2" patternUnits="userSpaceOnUse"><rect width="1" height="1" fill="#9a9a9a"/><rect x="1" y="1" width="1" height="1" fill="#9a9a9a"/></pattern><path d="M2.5 2.5h5l4 7.5-4 8h-5z" fill="url(#p192)" opacity=".75"/></svg>
</div>
<div style="position:absolute;left:401px;top:185px;width:25px;height:852px;background:#fbfbfb"></div>
<div style="position:absolute;left:401px;top:188px;width:25px;height:25px;background:#f0f0f0;border-top:1px solid #fff;border-left:1px solid #fff;border-right:2px solid #6d6d6d;border-bottom:2px solid #6d6d6d;outline:1px solid #e3e3e3;outline-offset:-1px"></div>
<svg style="left:401px;top:188px" width="25" height="25"><path d="M5.5 15.5h13L12 8.5z" fill="#000"/></svg>
<div style="position:absolute;left:401px;top:214px;width:25px;height:719px;background:#f0f0f0;border-top:1px solid #fff;border-left:1px solid #fff;border-right:2px solid #6d6d6d;border-bottom:2px solid #6d6d6d;outline:1px solid #e3e3e3;outline-offset:-1px"></div>
<div style="position:absolute;left:4px;top:1037px;width:422px;height:25px;background:#fbfbfb"></div>
<div style="position:absolute;left:4px;top:1037px;width:25px;height:25px;background:#f0f0f0;border-top:1px solid #fff;border-left:1px solid #fff;border-right:2px solid #6d6d6d;border-bottom:2px solid #6d6d6d;outline:1px solid #e3e3e3;outline-offset:-1px"></div>
<svg style="left:4px;top:1037px" width="25" height="25"><path d="M15.5 5.5v13L8.5 12z" fill="#000"/></svg>
<div style="position:absolute;left:29px;top:1037px;width:296.5px;height:25px;background:#f0f0f0;border-top:1px solid #fff;border-left:1px solid #fff;border-right:2px solid #6d6d6d;border-bottom:2px solid #6d6d6d;outline:1px solid #e3e3e3;outline-offset:-1px"></div>
<div style="position:absolute;left:376px;top:1037px;width:25px;height:25px;background:#f0f0f0;border-top:1px solid #fff;border-left:1px solid #fff;border-right:2px solid #6d6d6d;border-bottom:2px solid #6d6d6d;outline:1px solid #e3e3e3;outline-offset:-1px"></div>
<svg style="left:376px;top:1037px" width="25" height="25"><path d="M9.5 5.5v13l7-6.5z" fill="#000"/></svg>
<div style="position:absolute;left:401px;top:1037px;width:25px;height:25px;background:#f0f0f0;border-top:1px solid #fff;border-left:1px solid #fff;border-right:2px solid #6d6d6d;border-bottom:2px solid #6d6d6d;outline:1px solid #e3e3e3;outline-offset:-1px"></div>
<svg style="left:401px;top:1037px" width="25" height="25"><path d="M5.5 9.5h13L12 16.5z" fill="#000"/></svg>
<div style="position:absolute;left:1px;top:1065.5px;width:430px;height:33.5px;background:#f8f8f8"></div>
<div style="position:absolute;left:0px;top:1099px;width:431px;height:7px;background:#fff"></div>
<div style="position:absolute;left:101px;top:1064.2px;width:329.5px;height:1.4px;background:#111"></div>
<div style="position:absolute;left:0px;top:1064.2px;width:3px;height:1.4px;background:#111"></div>
<div style="position:absolute;left:4.5px;top:1062.5px;width:97px;height:35px;background:#f0f0f0"></div>
<div style="position:absolute;left:4.5px;top:1097.2px;width:97.5px;height:1.4px;background:#111"></div>
<div style="position:absolute;left:101px;top:1064.2px;width:1.2px;height:34.4px;background:#111"></div>
<div style="position:absolute;left:36.4px;top:1072.62px;white-space:pre;line-height:18.99px;font-family:'Liberation Sans',sans-serif;font-size:17px;font-weight:normal;color:#000;letter-spacing:-0.103px;text-shadow:0.35px 0 0 rgba(0,0,0,.7)">Project</div>
<div style="position:absolute;left:135.7px;top:1072.62px;white-space:pre;line-height:18.99px;font-family:'Liberation Sans',sans-serif;font-size:17px;font-weight:normal;color:#9a9a9a;letter-spacing:-0.590px;text-shadow:0.4px 0 0 rgba(150,150,150,.7)">Books</div>
<div style="position:absolute;left:226px;top:1072.62px;white-space:pre;line-height:18.99px;font-family:'Liberation Sans',sans-serif;font-size:17px;font-weight:normal;color:#9a9a9a;letter-spacing:0.144px;text-shadow:0.4px 0 0 rgba(150,150,150,.7)">Functions</div>
<div style="position:absolute;left:341px;top:1072.62px;white-space:pre;line-height:18.99px;font-family:'Liberation Sans',sans-serif;font-size:17px;font-weight:normal;color:#9a9a9a;letter-spacing:-0.165px;text-shadow:0.4px 0 0 rgba(150,150,150,.7)">Templates</div>
<div style="position:absolute;left:191px;top:1070px;width:1.3px;height:22px;background:#a8a8a8"></div>
<div style="position:absolute;left:306.5px;top:1070px;width:1.3px;height:22px;background:#a8a8a8"></div>
<div style="position:absolute;left:422.3px;top:1070px;width:1.3px;height:22px;background:#a8a8a8"></div>
<svg style="left:10px;top:1070px" width="22" height="20" viewBox="0 0 22 20"><rect x=".6" y=".6" width="20.4" height="18.4" fill="#fdfdfd" stroke="#6d7fae" stroke-width="1.2"/><rect x="1.2" y="1.2" width="19.2" height="3.6" fill="#9db6ea"/>
<path d="M4 8h3M4 11.5h3M4 15h3" stroke="#9aa31a" stroke-width="2"/><path d="M8.5 8h9M8.5 11.5h9M8.5 15h9" stroke="#c8d22a" stroke-width="2"/><path d="M7.6 6v11" stroke="#555" stroke-width=".8"/></svg>
<svg style="left:107px;top:1066px" width="28" height="30" viewBox="0 0 28 30"><path d="M2 12L13 1.5l12 6-10 13z" fill="#8a5be0" stroke="#6a3fc4" stroke-width="1"/><path d="M2 12l1 4 12.5 8.5L25 11.5V7.5L15 20.5z" fill="#b99cf0" stroke="#6a3fc4" stroke-width="1"/>
<circle cx="18" cy="20.5" r="6.3" fill="#3c7be0" stroke="#bcd4fa" stroke-width="1.3"/></svg>
<div style="position:absolute;left:121.5px;top:1080.59px;white-space:pre;line-height:12.85px;font-family:'Liberation Sans',sans-serif;font-size:11.5px;font-weight:bold;color:#fff;letter-spacing:0.000px;">?</div>
<div style="position:absolute;left:202.5px;top:1071.76px;white-space:pre;line-height:18.69px;font-family:'Liberation Mono',sans-serif;font-size:16.5px;font-weight:normal;color:#111;letter-spacing:-4.600px;-webkit-text-stroke:0.4px">{ }</div>
<div style="position:absolute;left:313.5px;top:1071.43px;white-space:pre;line-height:19.82px;font-family:'Liberation Mono',sans-serif;font-size:17.5px;font-weight:normal;color:#111;letter-spacing:-3.800px;-webkit-text-stroke:0.4px">()</div>
<svg style="left:324px;top:1080px" width="14" height="13"><path d="M1 5h6V1.5l5.5 5L7 11.5V8H1z" fill="#2f6fd8"/></svg>
<svg style="left:23.5px;top:78px" width="20.5" height="23.5" viewBox="0 0 20.5 23.5"><linearGradient id="nw" x1="0" y1="0" x2="1" y2="1"><stop offset="0" stop-color="#fbfcfe"/><stop offset=".5" stop-color="#eef2f9"/><stop offset="1" stop-color="#cfdbea"/></linearGradient><path d="M1 22.5V1h13l5.5 5.5v16z" fill="url(#nw)" stroke="#a9a9a9" stroke-width="1.6"/><path d="M14 1v5.5h5.5" fill="#fff" stroke="#b5b5b5" stroke-width="1.2"/></svg>
<svg style="left:56.5px;top:79px" width="26" height="22.5" viewBox="0 0 26 22.5"><linearGradient id="op" x1="0" y1="0" x2="1" y2="1"><stop offset="0" stop-color="#fce88f"/><stop offset=".5" stop-color="#f4c83f"/><stop offset="1" stop-color="#d79a1a"/></linearGradient><path d="M1 21V6.5l1.5-1.5h6.5l2 2.5h8.5v4" fill="#f5e28e" stroke="#b08a5a" stroke-width="1.3"/><path d="M1.5 21.3L6.3 11h18l-4.6 10.3z" fill="url(#op)" stroke="#6b4a1d" stroke-width="1.3"/><path d="M14 4.5c3-3.5 7-3.3 9 .2" fill="none" stroke="#4b7fc0" stroke-width="2"/><path d="M25 1.2v6.5h-6z" fill="#3f6fae"/></svg>
<svg style="left:94.5px;top:80px" width="21.5" height="21" viewBox="0 0 22 22"><linearGradient id="fl1" x1="0" y1="0" x2="1" y2="1"><stop offset="0" stop-color="#8d86e6"/><stop offset=".6" stop-color="#5b58c2"/><stop offset="1" stop-color="#3f5fa8"/></linearGradient><path d="M.6 .6h19.8l1 1v19.8H1.6l-1-1z" fill="url(#fl1)" stroke="#4a4aa8" stroke-width="1"/><rect x="4.5" y="1" width="12.5" height="9" fill="#f4f6fb" stroke="#c9cfe4" stroke-width=".8"/><rect x="6.5" y="14" width="10" height="7.2" fill="#3a4474"/><rect x="11.5" y="15" width="4" height="5.5" fill="#eceff8"/><rect x="7.5" y="15.5" width="3" height="3.5" fill="#10121e"/></svg>
<svg style="left:138.5px;top:80px" width="13.5" height="13" viewBox="0 0 22 22"><linearGradient id="fl2" x1="0" y1="0" x2="1" y2="1"><stop offset="0" stop-color="#8d86e6"/><stop offset=".6" stop-color="#5b58c2"/><stop offset="1" stop-color="#3f5fa8"/></linearGradient><path d="M.6 .6h19.8l1 1v19.8H1.6l-1-1z" fill="url(#fl2)" stroke="#4a4aa8" stroke-width="1"/><rect x="4.5" y="1" width="12.5" height="9" fill="#f4f6fb" stroke="#c9cfe4" stroke-width=".8"/><rect x="6.5" y="14" width="10" height="7.2" fill="#3a4474"/><rect x="11.5" y="15" width="4" height="5.5" fill="#eceff8"/><rect x="7.5" y="15.5" width="3" height="3.5" fill="#10121e"/></svg>
<svg style="left:134.5px;top:84px" width="13.5" height="13" viewBox="0 0 22 22"><linearGradient id="fl3" x1="0" y1="0" x2="1" y2="1"><stop offset="0" stop-color="#8d86e6"/><stop offset=".6" stop-color="#5b58c2"/><stop offset="1" stop-color="#3f5fa8"/></linearGradient><path d="M.6 .6h19.8l1 1v19.8H1.6l-1-1z" fill="url(#fl3)" stroke="#4a4aa8" stroke-width="1"/><rect x="4.5" y="1" width="12.5" height="9" fill="#f4f6fb" stroke="#c9cfe4" stroke-width=".8"/><rect x="6.5" y="14" width="10" height="7.2" fill="#3a4474"/><rect x="11.5" y="15" width="4" height="5.5" fill="#eceff8"/><rect x="7.5" y="15.5" width="3" height="3.5" fill="#10121e"/></svg>
<svg style="left:130.5px;top:88px" width="13.5" height="13" viewBox="0 0 22 22"><linearGradient id="fl4" x1="0" y1="0" x2="1" y2="1"><stop offset="0" stop-color="#8d86e6"/><stop offset=".6" stop-color="#5b58c2"/><stop offset="1" stop-color="#3f5fa8"/></linearGradient><path d="M.6 .6h19.8l1 1v19.8H1.6l-1-1z" fill="url(#fl4)" stroke="#4a4aa8" stroke-width="1"/><rect x="4.5" y="1" width="12.5" height="9" fill="#f4f6fb" stroke="#c9cfe4" stroke-width=".8"/><rect x="6.5" y="14" width="10" height="7.2" fill="#3a4474"/><rect x="11.5" y="15" width="4" height="5.5" fill="#eceff8"/><rect x="7.5" y="15.5" width="3" height="3.5" fill="#10121e"/></svg>
<svg style="left:179px;top:79.5px" width="18" height="22" viewBox="0 0 18 22"><path d="M3.8 1.2l6.8 13.5M14.2 1.2L7.4 14.7" stroke="#7f858f" stroke-width="2.4" fill="none"/><path d="M5 2.5l4 8 4-8" stroke="#c9cdd3" stroke-width="1" fill="none"/><ellipse cx="5.2" cy="17" rx="3.3" ry="3.9" fill="none" stroke="#2f66c4" stroke-width="2.6"/><ellipse cx="12.8" cy="17" rx="3.3" ry="3.9" fill="none" stroke="#2f66c4" stroke-width="2.6"/><path d="M7.5 12.5l1.5 2.5 1.5-2.5z" fill="#3a6fcb"/></svg>
<svg style="left:214px;top:79.5px" width="24" height="21" viewBox="0 0 24 21"><path d="M1 1h8.5l4 4v10h-12.5z" fill="#fafcff" stroke="#3f66b0" stroke-width="1.3"/><path d="M3.5 6h6.5" stroke="#4f8fe0" stroke-width="1.3"/><path d="M3.5 8.6h6.5" stroke="#4f8fe0" stroke-width="1.3"/><path d="M3.5 11.2h6.5" stroke="#4f8fe0" stroke-width="1.3"/><path d="M3.5 13.8h6.5" stroke="#4f8fe0" stroke-width="1.3"/><path d="M9.5 6h9l4 4v10h-13z" fill="#fafcff" stroke="#3f66b0" stroke-width="1.3"/><path d="M12 11h7" stroke="#4f8fe0" stroke-width="1.3"/><path d="M12 13.6h7" stroke="#4f8fe0" stroke-width="1.3"/><path d="M12 16.2h7" stroke="#4f8fe0" stroke-width="1.3"/><path d="M12 18.8h7" stroke="#4f8fe0" stroke-width="1.3"/></svg>
<svg style="left:248.5px;top:79.5px" width="25" height="22" viewBox="0 0 25 22"><linearGradient id="pa" x1="0" y1="0" x2="1" y2="1"><stop offset="0" stop-color="#f7d66a"/><stop offset="1" stop-color="#d49a22"/></linearGradient><rect x="1" y="3.2" width="17" height="16.5" rx="1.5" fill="url(#pa)" stroke="#9a6b1c" stroke-width="1.3"/><rect x="6" y=".8" width="7" height="5" rx="1" fill="#e8c25a" stroke="#8a5f18" stroke-width="1.2"/><path d="M11 9.8h9l4 4v7.4H11z" fill="#eef2f8" stroke="#56627e" stroke-width="1.3"/><path d="M13 13.5h7M13 16h9M13 18.5h9" stroke="#7e8aa6" stroke-width="1.2"/></svg>
<svg style="left:299.5px;top:80.5px" width="19" height="19" viewBox="0 0 19 19"><path d="M9 0L.3 5.300 9 11z" fill="#c8c8c8"/><path d="M7 5.300c6.500-2.300 10.500 1.200 9.800 5.700-.6 3.500-3.300 6-6.800 6.300" fill="none" stroke="#cfcfcf" stroke-width="4.200"/></svg>
<svg style="left:336px;top:80.5px" width="19" height="19" viewBox="0 0 19 19"><path d="M10 0l8.700 5.300L10 11z" fill="#c8c8c8"/><path d="M12 5.300C5.500 3 1.500 6.500 2.200 11c.6 3.500 3.300 6 6.800 6.300" fill="none" stroke="#cfcfcf" stroke-width="4.200"/></svg>
<svg style="left:382.5px;top:81px" width="22" height="17.5" viewBox="0 0 22 17.5"><path d="M.5 8.700L9 .5v4.700h12v7H9v4.700z" fill="#4a84dd" stroke="#3a6fd0" stroke-width=".6"/></svg>
<svg style="left:418px;top:81px" width="22" height="17.5" viewBox="0 0 22 17.5"><path d="M21.500 8.700L13 .5v4.700H1v7h12v4.700z" fill="#cfcfcf"/></svg>
<svg style="left:466px;top:79.5px" width="21" height="21.5" viewBox="0 0 21 21.5"><path d="M3.500 3.500v17.500" stroke="#8a8a8a" stroke-width="2.400"/><path d="M4.600 3c3-3 6-1.500 8.500-.5s4.500 0 6.500-1v9.500c-2 1.500-4 2-6.500 1s-5.500-2-8.500.500z" fill="#2fb7c9" stroke="#2a9fb8" stroke-width=".8"/><path d="M16 3.500l3.500 2v5" stroke="#2a3aa8" stroke-width="1.200" fill="none" stroke-dasharray="1.500 1.500"/></svg>
<svg style="left:502px;top:80px" width="23" height="22" viewBox="0 0 23 22"><path d="M3 4v17M9.500 4v17" stroke="#c9c9c9" stroke-width="2.200"/><path d="M1 3.500c3-3 5-1.500 7.500-.500s4 1 6.500 0v9c-2.500 1-4.500 1-6.500 0s-4.500-2-7.500.500z" fill="#cdcdcd"/><path d="M21 16.500h-8M14 13l-4 3.500 4 3.500z" stroke="#c4c4c4" stroke-width="2.400" fill="#c4c4c4"/></svg>
<svg style="left:538px;top:80px" width="23" height="22" viewBox="0 0 23 22"><path d="M3 4v17M9.500 4v17" stroke="#c9c9c9" stroke-width="2.200"/><path d="M1 3.500c3-3 5-1.500 7.500-.500s4 1 6.500 0v9c-2.500 1-4.500 1-6.500 0s-4.500-2-7.500.500z" fill="#cdcdcd"/><path d="M11 16.500h8M18 13l4 3.500-4 3.500z" stroke="#c4c4c4" stroke-width="2.400" fill="#c4c4c4"/></svg>
<svg style="left:575px;top:80px" width="23" height="22" viewBox="0 0 23 22"><path d="M3 4v17M9.500 4v17" stroke="#c9c9c9" stroke-width="2.200"/><path d="M1 3.500c3-3 5-1.500 7.500-.500s4 1 6.500 0v9c-2.500 1-4.500 1-6.500 0s-4.500-2-7.500.500z" fill="#cdcdcd"/><path d="M14 13.500l7 7M21 13.500l-7 7" stroke="#c4c4c4" stroke-width="2.600"/></svg>
<svg style="left:620.5px;top:77.5px" width="25" height="24" viewBox="0 0 25 24"><path d="M11.500 0v24" stroke="#000" stroke-width="1.300" stroke-dasharray="1.300 3.200"/><path d="M3.500 4.500h20.500" stroke="#000" stroke-width="1.800"/><path d="M11.500 8.500h12.500" stroke="#000" stroke-width="2.600"/><path d="M11.500 13h8" stroke="#000" stroke-width="2.600"/><path d="M3.500 16.700h20.500M3.500 20h10" stroke="#000" stroke-width="1.700"/><path d="M.5 10.500H6M4.500 7l4.500 3.500-4.500 3.500z" stroke="#3d7bdc" stroke-width="1.800" fill="#3d7bdc"/></svg>
<svg style="left:656.5px;top:77.5px" width="25" height="24" viewBox="0 0 25 24"><path d="M11.500 0v24" stroke="#000" stroke-width="1.300" stroke-dasharray="1.300 3.200"/><path d="M3.500 4.500h20.500" stroke="#000" stroke-width="1.800"/><path d="M11.500 8.500h12.500" stroke="#000" stroke-width="2.600"/><path d="M11.500 13h8" stroke="#000" stroke-width="2.600"/><path d="M3.500 16.700h20.500M3.500 20h10" stroke="#000" stroke-width="1.700"/><path d="M9.500 10.500H4M5.500 7l-4.500 3.500 4.500 3.500z" stroke="#3d7bdc" stroke-width="1.800" fill="#3d7bdc"/></svg>
<svg style="left:693.5px;top:80.5px" width="24" height="21" viewBox="0 0 24 21"><path d="M5.500 1L1.500 18.500M11.500 1L7.500 18.500" stroke="#3f960c" stroke-width="2.700"/><path d="M13 3h9" stroke="#4aa016" stroke-width="1.300"/><path d="M12.500 7h9.500M12 11.500h10" stroke="#4aa016" stroke-width="1.600"/><path d="M11.500 15.500h10.500" stroke="#4aa016" stroke-width="1.600"/></svg>
<svg style="left:729.5px;top:80.5px" width="24" height="21" viewBox="0 0 24 21"><path d="M5.500 1L1.500 18.500M11.500 1L7.500 18.500" stroke="#3f960c" stroke-width="2.700"/><path d="M13 3h9" stroke="#4aa016" stroke-width="1.300"/><path d="M12.500 7h9.500M12 11.500h10" stroke="#4aa016" stroke-width="1.600"/><path d="M13.500 12.500l8.500 7.500M22 12.500l-8.500 7.500" stroke="#e01818" stroke-width="3"/></svg>
<svg style="left:777px;top:79px" width="26" height="21" viewBox="0 0 26 21"><linearGradient id="ff" x1="0" y1="0" x2="1" y2="1"><stop offset="0" stop-color="#fbe58a"/><stop offset="1" stop-color="#dca31f"/></linearGradient><path d="M1 19.500V3h8l2 2.500h9v14z" fill="#f6df88" stroke="#8a6a3a" stroke-width="1.300"/><path d="M1.500 19.500L6 9.500h17l-3.500 10z" fill="url(#ff)" stroke="#5f4418" stroke-width="1.200"/><path d="M11.500 9V3.500l2-2.500h2.500v3h3V1h2.500l2 2.500V9z" fill="#2b2b2b"/><circle cx="13.500" cy="9" r="2.700" fill="#555" stroke="#111"/><circle cx="21.500" cy="9" r="2.700" fill="#555" stroke="#111"/></svg>
<svg style="left:1039.5px;top:78.5px" width="24" height="23" viewBox="0 0 24 23"><path d="M1 1h11l4 4v16H1z" fill="#f8fbff" stroke="#4a74b8" stroke-width="1.300"/><path d="M3.500 6h9" stroke="#4a8ee0" stroke-width="1.400"/><path d="M3.500 8.8h9" stroke="#4a8ee0" stroke-width="1.400"/><path d="M3.500 11.6h9" stroke="#4a8ee0" stroke-width="1.400"/><path d="M3.500 14.4h9" stroke="#4a8ee0" stroke-width="1.400"/><path d="M3.500 17.2h9" stroke="#4a8ee0" stroke-width="1.400"/><path d="M10 22v-6l2-3.500h2v3h3v-3h2l2.500 3.500v6h-4.500v-3.500h-2.500V22z" fill="#2c2c2c"/></svg>
<svg style="left:1073.5px;top:79.5px" width="25" height="22" viewBox="0 0 25 22"><path d="M4 7h9v7h4.500L8.500 22-.5 14H4z" fill="#3f86e4" stroke="#2c6fd0" stroke-width=".8"/><path d="M10 10V4.500L12 1h2.500v3h3V1H20l2.500 3.500V10h-4.500V7h-3v3z" fill="#2c2c2c"/></svg>
<svg style="left:1123px;top:77.5px" width="25" height="24" viewBox="0 0 25 24"><circle cx="11" cy="10.800" r="9.500" fill="#fff" stroke="#1a1a1a" stroke-width="1.700"/><circle cx="11" cy="10.800" r="7.700" fill="none" stroke="#c8c8c8" stroke-width="1"/><path d="M16.500 17.500l6 5" stroke="#16348f" stroke-width="3.800"/></svg>
<div style="position:absolute;left:1127.3px;top:74.94px;white-space:pre;line-height:25.13px;font-family:'Liberation Sans',sans-serif;font-size:22.5px;font-weight:bold;color:#e01414;letter-spacing:0.000px;transform:scaleX(.84);transform-origin:0 0">d</div>
<svg style="left:1156px;top:88.5px" width="9" height="5.5" viewBox="0 0 9 5.5"><path d="M0 0h9L4.500 5.500z" fill="#000"/></svg>
<svg style="left:1331.5px;top:88.5px" width="9" height="5.5" viewBox="0 0 9 5.5"><path d="M0 0h9L4.500 5.500z" fill="#000"/></svg>
<svg style="left:1399px;top:88.5px" width="9" height="5.5" viewBox="0 0 9 5.5"><path d="M0 0h9L4.500 5.500z" fill="#000"/></svg>
<svg style="left:163px;top:130.5px" width="9" height="5.5" viewBox="0 0 9 5.5"><path d="M0 0h9L4.500 5.500z" fill="#000"/></svg>
<svg style="left:1192.5px;top:81px" width="19" height="19" viewBox="0 0 19 19"><radialGradient id="bp" cx=".4" cy=".35" r=".7"><stop offset="0" stop-color="#e06a62"/><stop offset="1" stop-color="#d42424"/></radialGradient><circle cx="9.500" cy="9.500" r="8.600" fill="url(#bp)" stroke="#e23a3a" stroke-width=".8" stroke-dasharray="2 1.500"/></svg>
<svg style="left:1228.5px;top:81px" width="19" height="19" viewBox="0 0 19 19"><circle cx="9.500" cy="9.500" r="8" fill="#f6f6f6" stroke="#d2d2d2" stroke-width="1.600"/></svg>
<svg style="left:1262px;top:78.5px" width="24" height="23" viewBox="0 0 24 23"><circle cx="15.500" cy="8" r="6.800" fill="#fbf3ee" stroke="#d93a3a" stroke-width="1.700"/><circle cx="8.500" cy="14.500" r="7.200" fill="#fdf7f2" stroke="#d93a3a" stroke-width="1.700"/></svg>
<svg style="left:1298.5px;top:77.5px" width="25" height="24" viewBox="0 0 25 24"><circle cx="14.500" cy="8" r="6.800" fill="#e27a74"/><circle cx="8" cy="14.500" r="7.200" fill="#e06a66"/><path d="M4 20a7 7 0 008 1.500" fill="none" stroke="#e31b1b" stroke-width="2"/><path d="M18 4a7 7 0 012.500 7" fill="none" stroke="#e31b1b" stroke-width="2"/><path d="M12.500 12.500l10.500 10.500M23 12.500L12.500 23" stroke="#e3a21c" stroke-width="3.600"/></svg>
<svg style="left:1368px;top:80px" width="21.5" height="19.5" viewBox="0 0 21.5 19.5"><rect x=".6" y=".6" width="20" height="18" fill="#fbfcfe" stroke="#53648f" stroke-width="1.200"/><rect x="1" y="1" width="19.200" height="3.600" fill="#5f8ee8"/><path d="M4 5.500v12" stroke="#444" stroke-width="1.400"/><path d="M5 7.500h3" stroke="#b8c81a" stroke-width="2"/><path d="M6.500 11h11M6.500 14h11M6.500 17h11" stroke="#c6d618" stroke-width="2"/><path d="M10 11h6M10 14h6M10 17h6" stroke="#7fb01a" stroke-width="1.600"/></svg>
<svg style="left:1433px;top:78px" width="24" height="23" viewBox="0 0 24 23"><path d="M9 9L20 19.500" stroke="#587fb6" stroke-width="5.200" stroke-linecap="round"/><path d="M9 9L20 19.500" stroke="#8fb0dc" stroke-width="1.600" stroke-linecap="round"/><circle cx="7" cy="7" r="6" fill="#6a90c4"/><circle cx="7" cy="7" r="4.300" fill="#86a8d6"/><path d="M4.800 -1h4.400v8h-4.400z" transform="rotate(-28 7 7)" fill="#fff"/><path d="M1.800 5.500a6 6 0 001 5" stroke="#486ea6" stroke-width="1" fill="none"/></svg>
<svg style="left:22px;top:119.5px" width="24" height="24" viewBox="0 0 24 24"><path d="M1 17.5L10.500 12l11.500 4.5L12 23.5z" fill="#fdfdfe" stroke="#2f4d88" stroke-width="1.200"/><path d="M1 14L10.500 8.5l11.500 4.5L12 20z" fill="#fdfdfe" stroke="#2f4d88" stroke-width="1.200"/><path d="M1 10.5L10.500 5l11.500 4.5L12 16.5z" fill="#fdfdfe" stroke="#2f4d88" stroke-width="1.200"/><path d="M11.5 0.5V8.5" stroke="#3b7fe0" stroke-width="2.4"/><path d="M7.34 7h8.32l-4.16 5z" fill="#3b7fe0"/></svg>
<svg style="left:58px;top:119.5px" width="24" height="23" viewBox="0 0 24 23"><path d="M1 7V21.5H22.5V7" fill="#f2f6fc" stroke="#2f4d88" stroke-width="1.400"/><path d="M3 15.5H21.5 M3 18.5H21.5" stroke="#2f4d88" stroke-width="1.500" stroke-dasharray="1.500 1.700"/><path d="M2 2H22 M3.5 5H22" stroke="#2f4d88" stroke-width="1.300" stroke-dasharray="1.300 2"/><path d="M11.7 3.5V11" stroke="#3b7fe0" stroke-width="1.95"/><path d="M8.32 9.5h6.76l-3.38 5z" fill="#3b7fe0"/></svg>
<svg style="left:94.5px;top:119.5px" width="24" height="23" viewBox="0 0 24 23"><path d="M1 7V21.5H22.5V7" fill="#f2f6fc" stroke="#2f4d88" stroke-width="1.400"/><path d="M3 15.5H21.5 M3 18.5H21.5" stroke="#2f4d88" stroke-width="1.500" stroke-dasharray="1.500 1.700"/><path d="M2 2H22 M3.5 5H22" stroke="#2f4d88" stroke-width="1.300" stroke-dasharray="1.300 2"/><path d="M7.5 3.5V11" stroke="#3b7fe0" stroke-width="1.725"/><path d="M4.51 9.5h5.98l-2.99 5z" fill="#3b7fe0"/><path d="M16 3.5V11" stroke="#3b7fe0" stroke-width="1.725"/><path d="M13.01 9.5h5.98l-2.99 5z" fill="#3b7fe0"/></svg>
<svg style="left:131.5px;top:119.5px" width="24" height="24" viewBox="0 0 24 24"><path d="M1 17.5L10.500 12l11.500 4.5L12 23.5z" fill="#e6e23a" stroke="#8a8a1a" stroke-width="1.200"/><path d="M1 15L10.500 9.5l11.500 4.5L12 21z" fill="#3fbf3f" stroke="#1f7a1f" stroke-width="1.200"/><path d="M1 12L10.500 6.5l11.500 4.5L12 18z" fill="#e9e9e9" stroke="#8a8a8a" stroke-width="1.200"/><path d="M1 11L10 5.500l3 3.500 8.500-6 1 10" fill="#d6d6d6" stroke="#8f8f8f" stroke-width="1"/><path d="M10.5 0.5V6.5" stroke="#3b7fe0" stroke-width="1.95"/><path d="M7.12 5h6.76l-3.38 5z" fill="#3b7fe0"/></svg>
<svg style="left:184px;top:119.5px" width="26" height="24" viewBox="0 0 26 24"><path d="M1 7V21.5H21.5V7" fill="#f2f6fc" stroke="#c6c6c6" stroke-width="1.400"/><path d="M3 15.5H20.5 M3 18.5H20.5" stroke="#c6c6c6" stroke-width="1.500" stroke-dasharray="1.500 1.700"/><path d="M2 2H21 M3.5 5H21" stroke="#c9c9c9" stroke-width="1.300" stroke-dasharray="1.300 2"/><path d="M15 13.500l9 9M24 13.500l-9 9" stroke="#c2c2c2" stroke-width="3"/></svg>
<div style="position:absolute;left:233.5px;top:118.86px;white-space:pre;line-height:11.89px;font-family:'Liberation Mono',sans-serif;font-size:10.5px;font-weight:bold;color:#222;letter-spacing:-0.180px;">LOAD</div>
<svg style="left:233px;top:127.5px" width="25" height="16" viewBox="0 0 25 16"><path d="M3.500 .5h5.500v7h3.500L6.200 15 0 7.500h3.500z" fill="#3b7fe0"/><path d="M16 .5h5.500v7H25L18.700 15l-6.200-7.500H16z" fill="#3b7fe0"/><path d="M12.500 0l1.500 3 3-1.500-.8 3.200 3.300.8-2.800 2 1.800 2.800-3.300-.3-.7 3.300-2-2.700-2 2.700-.7-3.300-3.300.3 1.800-2.800-2.800-2 3.300-.8L8 1.500 11 3z" fill="#e4f01a" stroke="#b8c418" stroke-width=".6"/></svg>
<svg style="left:505px;top:119.5px" width="26" height="24" viewBox="0 0 26 24"><path d="M8 8.500l16 13.500" stroke="#111" stroke-width="2.600"/><path d="M9 9l3 2.500" stroke="#e8d21a" stroke-width="2.600"/><path d="M14 3l2-1M19 1.500l2 .5M17 6l2 .5M22 8l1.500-.5M23 4l1-1" stroke="#e8502a" stroke-width="1.800"/><path d="M7 9v4M3 19v-3h8.500v3M7 13v3" stroke="#3b6fd0" stroke-width="1.200" fill="none"/><rect x="5" y="5.500" width="4" height="4" fill="#f2e23a" stroke="#3b6fd0" stroke-width="1"/><rect x="1" y="18.500" width="4" height="4" fill="#f2e23a" stroke="#3b6fd0" stroke-width="1"/><rect x="9.500" y="18.500" width="4" height="4" fill="#f2e23a" stroke="#3b6fd0" stroke-width="1"/><path d="M5 13l2 2.500 2-2.500-2-2z" fill="#2a4fa8"/></svg>
<svg style="left:554.5px;top:119.5px" width="23" height="24" viewBox="0 0 23 24"><path d="M1 14l2-3h17l2 3v9H1z" fill="#1f3f9a" stroke="#16307a" stroke-width="1"/><path d="M7.500 11V3l1.500-2h6l1.500 2v8z" fill="#2a4fb0" stroke="#16307a" stroke-width="1"/><rect x="8.500" y="3" width="7" height="8.500" fill="#e81a1a"/><rect x="2" y="15" width="8" height="7.500" fill="#1ed01e"/><rect x="13" y="15" width="8" height="7.500" fill="#f0f0f0"/><path d="M13 22.500h8v-7.500" fill="none" stroke="#bbb" stroke-width="1.200"/></svg>
<svg style="left:589px;top:120.5px" width="24" height="23" viewBox="0 0 24 23"><rect x="1" y="1" width="14" height="9.500" fill="#f4f4f4" stroke="#c2c2c2" stroke-width="1.300"/><rect x="1" y="1" width="14" height="3" fill="#c8c8c8"/><rect x="4.5" y="6.5" width="14" height="9.500" fill="#f4f4f4" stroke="#c2c2c2" stroke-width="1.300"/><rect x="4.5" y="6.5" width="14" height="3" fill="#c8c8c8"/><rect x="8.5" y="12.5" width="14" height="9.500" fill="#f4f4f4" stroke="#c2c2c2" stroke-width="1.300"/><rect x="8.5" y="12.5" width="14" height="3" fill="#c8c8c8"/></svg>
<svg style="left:626px;top:121px" width="23" height="23" viewBox="0 0 23 23"><path d="M11.3 0.9L21.6 11.2L11.3 21.5L1 11.2z" fill="#10e010" stroke="#000" stroke-width="1.2"/><path d="M11.3 5.274l1.600 1.600-1.600 1.600-1.600-1.600z" fill="#000"/><path d="M15.626 9.6l1.600 1.600-1.600 1.600-1.600-1.600z" fill="#000"/><path d="M11.3 13.926l1.600 1.600-1.600 1.600-1.600-1.600z" fill="#000"/><path d="M6.974 9.6l1.600 1.600-1.600 1.600-1.600-1.600z" fill="#000"/></svg>
<svg style="left:661px;top:119.5px" width="25" height="24" viewBox="0 0 25 24"><path d="M9.5 1.5L16 8L9.5 14.5L3 8z" fill="#10e010" stroke="#000" stroke-width="1"/><path d="M9.5 3.67l1.600 1.600-1.600 1.600-1.600-1.600z" fill="#000"/><path d="M12.23 6.4l1.600 1.600-1.600 1.600-1.600-1.600z" fill="#000"/><path d="M9.5 9.13l1.600 1.600-1.600 1.600-1.600-1.600z" fill="#000"/><path d="M6.77 6.4l1.600 1.600-1.600 1.600-1.600-1.600z" fill="#000"/><path d="M18 4L23 9L18 14L13 9z" fill="#1fe8f0" stroke="#000" stroke-width="0.8"/><path d="M1 9.500h22.500l-8.500 9v4.500h-5.500v-4.500z" fill="#dff1fb" stroke="#9a9a9a" stroke-width="1.300"/><path d="M1.500 9.500h21.500" stroke="#7a7a7a" stroke-width="1.600"/></svg>
<svg style="left:697px;top:119.5px" width="26" height="24" viewBox="0 0 26 24"><path d="M1.500 9v13.500h22.500V9" fill="#fff" stroke="#000" stroke-width="1.600"/><path d="M8.5 1L14.5 7L8.5 13L2.5 7z" fill="#e8ec20" stroke="#000" stroke-width="0.8"/><path d="M8.5 2.88l1.600 1.600-1.600 1.600-1.600-1.600z" fill="#000"/><path d="M11.02 5.4l1.600 1.600-1.600 1.600-1.600-1.600z" fill="#000"/><path d="M8.5 7.92l1.600 1.600-1.600 1.600-1.600-1.600z" fill="#000"/><path d="M5.98 5.4l1.600 1.600-1.600 1.600-1.600-1.600z" fill="#000"/><path d="M18.5 2.5L25 9L18.5 15.5L12 9z" fill="#1fe8f0" stroke="#000" stroke-width="0.8"/><path d="M18.5 4.67l1.600 1.600-1.600 1.600-1.600-1.600z" fill="#000"/><path d="M21.23 7.4l1.600 1.600-1.600 1.600-1.600-1.600z" fill="#000"/><path d="M18.5 10.13l1.600 1.600-1.600 1.600-1.600-1.600z" fill="#000"/><path d="M15.77 7.4l1.600 1.600-1.600 1.600-1.600-1.600z" fill="#000"/><path d="M11 8L18 15L11 22L4 15z" fill="#10e010" stroke="#000" stroke-width="0.8"/><path d="M11 10.46l1.600 1.600-1.600 1.600-1.600-1.600z" fill="#000"/><path d="M13.94 13.4l1.600 1.600-1.600 1.600-1.600-1.600z" fill="#000"/><path d="M11 16.34l1.600 1.600-1.600 1.600-1.600-1.600z" fill="#000"/><path d="M8.06 13.4l1.600 1.600-1.600 1.600-1.600-1.600z" fill="#000"/><path d="M1.500 14l7 8.500M24 14l-7 8.500" stroke="#000" stroke-width="1.300"/></svg>
</body></html>
